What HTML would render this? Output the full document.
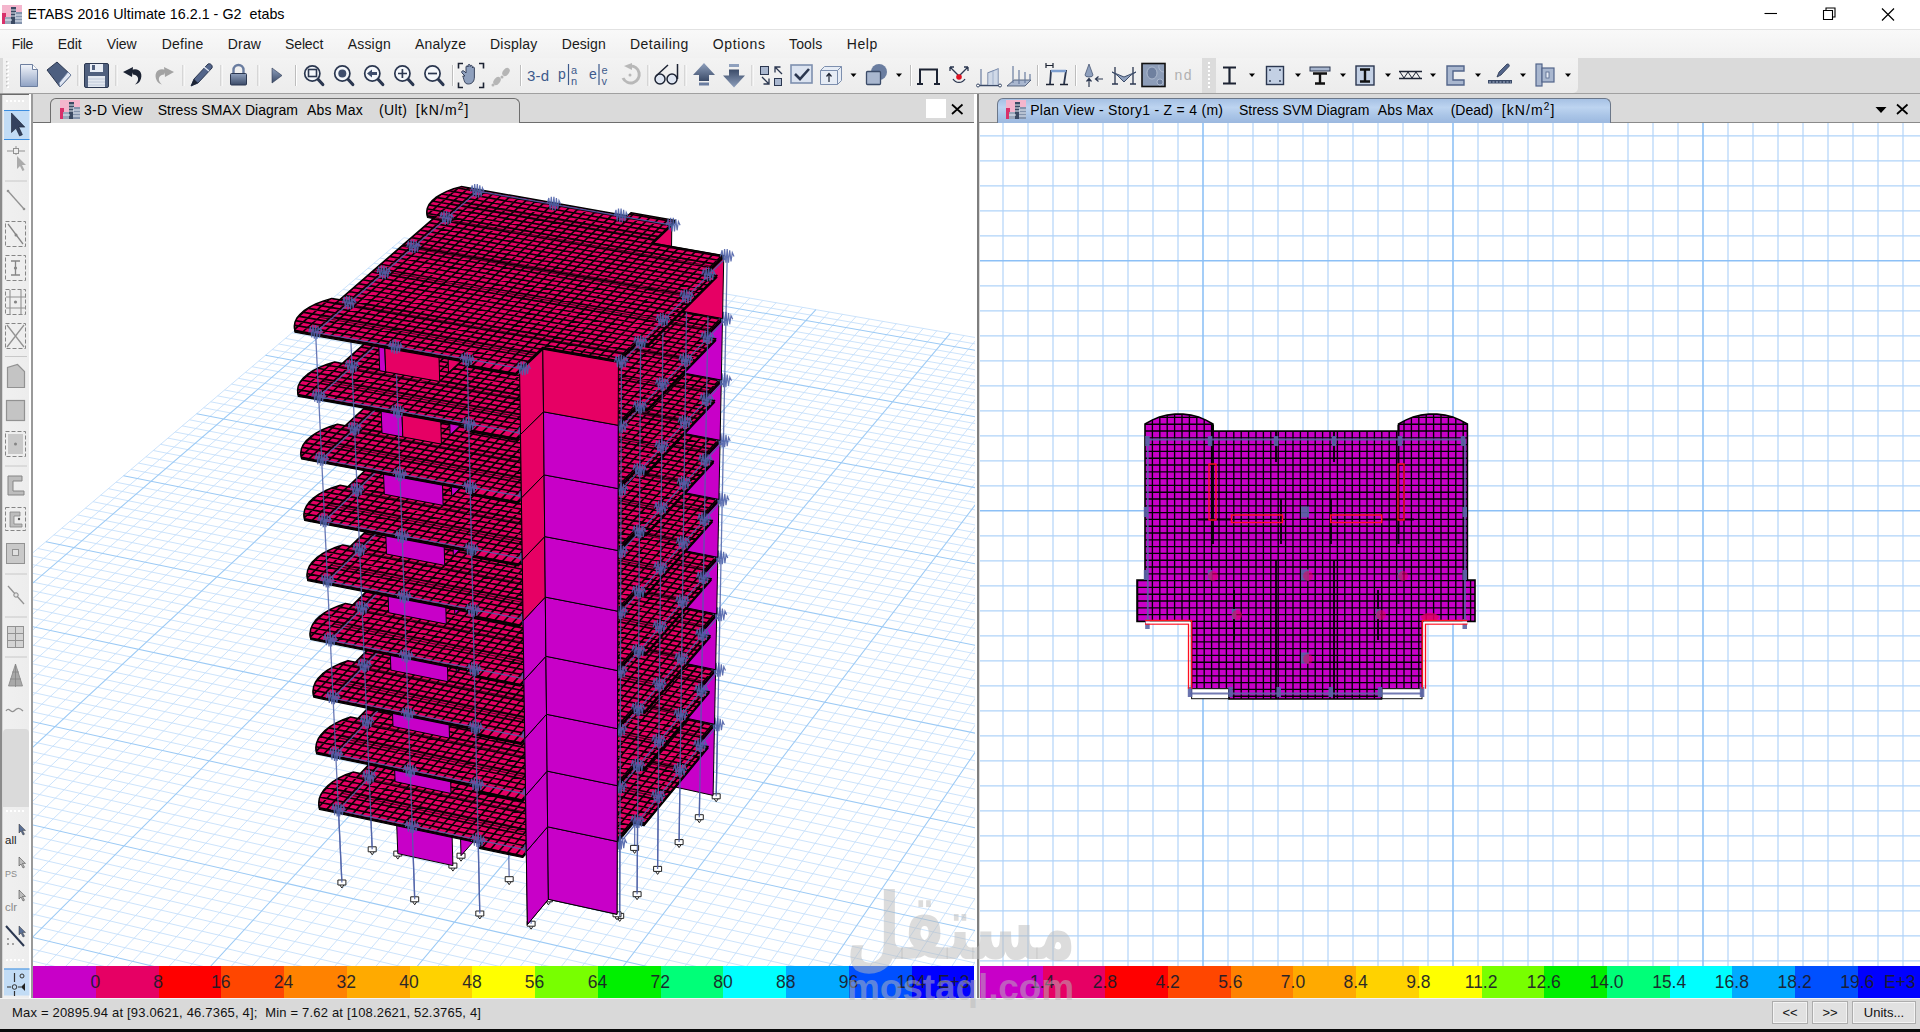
<!DOCTYPE html>
<html lang="en"><head><meta charset="utf-8"><title>ETABS 2016 Ultimate 16.2.1 - G2 etabs</title>
<style>
html,body{margin:0;padding:0}
body{width:1920px;height:1032px;position:relative;overflow:hidden;background:#dadada;font-family:"Liberation Sans",sans-serif}
.abs{position:absolute}
.t{position:absolute;white-space:pre;line-height:normal}
#title{left:0;top:0;width:1920px;height:29px;background:#fff;border-bottom:1px solid #e2e2e2}
#menu{left:0;top:30px;width:1920px;height:28px;background:linear-gradient(#f9f9f9,#f1f1f1)}
#tb{left:3px;top:58px;width:1575px;height:34.500px;background:linear-gradient(#f3f3f3,#ececec);border-radius:0 0 5px 0}
#tbline{left:0;top:93px;width:1920px;height:1px;background:#a0a0a0}
#ltb{left:0;top:94px;width:29px;height:904px;background:linear-gradient(90deg,#8a8a8a 0,#8a8a8a 1.5px,#d6d6d6 1.5px,#d6d6d6 3px,#f0f0f0 3px,#ededed 29px);border-top:1px solid #6a6a6a;box-sizing:border-box}
#ltbgap{left:3px;top:729px;width:26px;height:78px;background:#dadada;border-radius:4px 4px 0 0}
#lborder{left:29px;top:94px;width:3.500px;height:904px;background:linear-gradient(90deg,#fff 0,#fff 2px,#9a9a9a 2px,#9a9a9a 3.500px)}
#lhead{left:32.500px;top:94px;width:941.500px;height:27.500px;background:#dadada;border-bottom:1.500px solid #6e6e6e;box-sizing:content-box}
#ltab{left:50px;top:97.500px;width:470px;height:25px;background:#dadada;border:1.500px solid #6e6e6e;border-bottom:none;border-radius:6px 6px 0 0;box-sizing:border-box}
#lview{left:33px;top:123px;width:941.500px;height:843px;background:#fff;overflow:hidden}
#vdiv{left:974px;top:94px;width:5px;height:904px;background:linear-gradient(90deg,#fff 0,#fff 3.200px,#7e7e7e 3.200px,#7e7e7e 4.800px,#dadada 4.800px)}
#rhead{left:979px;top:94px;width:941px;height:27.500px;background:#dadada;border-bottom:1.500px solid #8a8a8a}
#rtab{left:997px;top:97.500px;width:614px;height:25.500px;background:linear-gradient(#a6c1e4,#bdd4f0 35%,#aac5e7 68%,#9bb8df);border:1.300px solid #6b7789;border-bottom:none;border-radius:6px 6px 0 0;box-sizing:border-box}
#rview{left:980px;top:123px;width:940px;height:843px;background:#fff;overflow:hidden}
.leg{overflow:hidden}
.lg{position:absolute;top:5.700px;width:60px;text-align:center;font-size:17.500px;color:#1c1c2a;line-height:normal;opacity:.93}
#status{left:0;top:998px;width:1920px;height:31px;background:#d9d9d9;border-top:1px solid #f4f4f4;box-sizing:border-box}
#bottom{left:0;top:1029px;width:1920px;height:3px;background:#0a0a0a}
.btn{position:absolute;top:1001px;height:23px;border:1px solid #adadad;background:#e1e1e1;box-sizing:border-box;font-size:13px;text-align:center;line-height:21px;color:#111;box-shadow:inset 0 0 0 1px #f3f3f3}
.sup{font-size:10px;position:relative;top:-5px}
#wm{left:846px;top:880px;width:240px;height:130px;color:rgba(185,185,185,.5);pointer-events:none}
</style></head>
<body>
<div id="title" class="abs"></div>
<svg class="abs" style="left:2px;top:4px" width="20" height="20" viewBox="0 0 20 20"><rect x="0" y="1" width="20" height="14" fill="#f4b6cd"/><rect x="0" y="9" width="4" height="11" fill="#d8306a"/><path d="M3 13h7v7h-7z" fill="#9aa7bb"/><path d="M9 3h5v17h-5z" fill="#3b4a63"/><path d="M13 8h7v12h-7z" fill="#8494ad"/><path d="M9 6h5M9 9h5M9 12h5M13 11h7M13 14h7M13 17h7M3 16h7" stroke="#e9eef6" stroke-width="1"/></svg>
<svg class="abs" style="left:1740px;top:0" width="180" height="30" viewBox="1740 0 180 30"><path d="M1764.500 13.500h12.500" stroke="#000" stroke-width="1.100"/><path d="M1823.500 10.500h9v9h-9zM1826 10.500v-2.500h9v9h-2.500" fill="none" stroke="#000" stroke-width="1.100"/><path d="M1882 8.500l12 12M1894 8.500l-12 12" stroke="#000" stroke-width="1.200"/></svg>
<div id="menu" class="abs"></div>
<div id="tb" class="abs"></div>
<svg class="abs" style="left:0;top:56px" width="1920" height="40" viewBox="0 56 1920 40"><g fill="#fff"><rect x="7" y="62" width="2" height="2"/><rect x="7" y="66" width="2" height="2"/><rect x="7" y="70" width="2" height="2"/><rect x="7" y="74" width="2" height="2"/><rect x="7" y="78" width="2" height="2"/><rect x="7" y="82" width="2" height="2"/><rect x="7" y="86" width="2" height="2"/></g><g fill="#c4c4c4"><rect x="6" y="61" width="1.5" height="1.5"/><rect x="6" y="65" width="1.5" height="1.5"/><rect x="6" y="69" width="1.5" height="1.5"/><rect x="6" y="73" width="1.5" height="1.5"/><rect x="6" y="77" width="1.5" height="1.5"/><rect x="6" y="81" width="1.5" height="1.5"/><rect x="6" y="85" width="1.5" height="1.5"/></g><defs><linearGradient id="gdoc" x1="0" y1="0" x2="0" y2="1"><stop offset="0" stop-color="#f2f5fa"/><stop offset="1" stop-color="#8fa2c4"/></linearGradient><linearGradient id="gblue" x1="0" y1="0" x2="0" y2="1"><stop offset="0" stop-color="#8fa0bd"/><stop offset="1" stop-color="#3b4b68"/></linearGradient><linearGradient id="gblue2" x1="0" y1="0" x2="0" y2="1"><stop offset="0" stop-color="#3b4b68"/><stop offset="1" stop-color="#8fa0bd"/></linearGradient></defs><path d="M20.5 64.5h12l5 5v17h-17z" fill="url(#gdoc)" stroke="#6d7f9f" stroke-width="1"/><path d="M32.5 64.5v5h5" fill="#fff" stroke="#6d7f9f" stroke-width="1"/><path d="M47 70l10-8 14 13-11 12z" fill="#4d5f80" stroke="#2b3750" stroke-width="1"/><path d="M60 87l11-12-3-3-9 11z" fill="#dfe6f2" stroke="#6a7da0" stroke-width=".8"/><line x1="78" y1="65" x2="78" y2="86" stroke="#bdbdbd" stroke-width="1"/><line x1="79" y1="65" x2="79" y2="86" stroke="#fff" stroke-width="1"/><rect x="84.5" y="63.5" width="24" height="24" rx="1.5" fill="#50607e" stroke="#2b3750"/><rect x="90" y="64" width="13" height="8" fill="#e9eef6"/><rect x="92" y="65" width="3" height="5" fill="#50607e"/><rect x="88" y="76" width="17" height="11" fill="#e3e8f0"/><path d="M88 79h17M88 82h17M88 85h17" stroke="#b8c2d3" stroke-width=".8"/><line x1="116" y1="65" x2="116" y2="86" stroke="#bdbdbd" stroke-width="1"/><line x1="117" y1="65" x2="117" y2="86" stroke="#fff" stroke-width="1"/><path d="M131 70c8-3 13 3 9 11-1 2-3 3-5 3.5 4-3 5-9-2-10z" fill="#1c2333"/><path d="M123 72l10-5-1 10z" fill="#1c2333"/><path d="M166 70c-8-3-13 3-9 11 1 2 3 3 5 3.5-4-3-5-9 2-10z" fill="#a3a3a3"/><path d="M174 72l-10-5 1 10z" fill="#a3a3a3"/><line x1="183" y1="65" x2="183" y2="86" stroke="#bdbdbd" stroke-width="1"/><line x1="184" y1="65" x2="184" y2="86" stroke="#fff" stroke-width="1"/><path d="M191 86l3-7 14-15c2-1 5 1 4 4l-14 15z" fill="#53658a" stroke="#2b3750" stroke-width="1"/><path d="M191 86l3-7 4 4z" fill="#1c2333"/><path d="M204 67l5 4" stroke="#dfe6f2" stroke-width="1.5"/><line x1="221" y1="65" x2="221" y2="86" stroke="#bdbdbd" stroke-width="1"/><line x1="222" y1="65" x2="222" y2="86" stroke="#fff" stroke-width="1"/><path d="M233.5 74v-4a5 5 0 0 1 10 0v4" fill="none" stroke="#6a7da0" stroke-width="2.4"/><rect x="230.5" y="73.5" width="16" height="11.5" rx="1" fill="url(#gblue)" stroke="#2b3750"/><line x1="258" y1="65" x2="258" y2="86" stroke="#bdbdbd" stroke-width="1"/><line x1="259" y1="65" x2="259" y2="86" stroke="#fff" stroke-width="1"/><path d="M272 68l10 7.5-10 7.5z" fill="url(#gblue)" stroke="#2b3750" stroke-width=".6"/><line x1="295.5" y1="65" x2="295.5" y2="86" stroke="#bdbdbd" stroke-width="1"/><line x1="296.5" y1="65" x2="296.5" y2="86" stroke="#fff" stroke-width="1"/><line x1="317.8" y1="79" x2="322.8" y2="84.5" stroke="#2b3750" stroke-width="3.2" stroke-linecap="round"/><circle cx="312.3" cy="73.5" r="7.6" fill="#f4f7fb" stroke="#2b3750" stroke-width="1.7"/><rect x="308.5" y="69.5" width="8" height="7" fill="none" stroke="#2b3750" stroke-width="1.6"/><line x1="347.8" y1="79" x2="352.8" y2="84.5" stroke="#2b3750" stroke-width="3.2" stroke-linecap="round"/><circle cx="342.3" cy="73.5" r="7.6" fill="#f4f7fb" stroke="#2b3750" stroke-width="1.7"/><circle cx="342.3" cy="73.5" r="4" fill="#3e4d6c"/><line x1="377.8" y1="79" x2="382.8" y2="84.5" stroke="#2b3750" stroke-width="3.2" stroke-linecap="round"/><circle cx="372.3" cy="73.5" r="7.6" fill="#f4f7fb" stroke="#2b3750" stroke-width="1.7"/><path d="M367 73.5l5-4v2.500h5v3h-5v2.500z" fill="#3e4d6c"/><line x1="407.9" y1="79" x2="412.9" y2="84.5" stroke="#2b3750" stroke-width="3.2" stroke-linecap="round"/><circle cx="402.4" cy="73.5" r="7.6" fill="#f4f7fb" stroke="#2b3750" stroke-width="1.7"/><path d="M398 73.5h9M402.400 69v9" stroke="#2b3750" stroke-width="1.700"/><line x1="438" y1="79" x2="443" y2="84.5" stroke="#2b3750" stroke-width="3.2" stroke-linecap="round"/><circle cx="432.5" cy="73.5" r="7.6" fill="#f4f7fb" stroke="#2b3750" stroke-width="1.7"/><path d="M428 73.5h9" stroke="#2b3750" stroke-width="1.700"/><line x1="452.5" y1="65" x2="452.5" y2="86" stroke="#bdbdbd" stroke-width="1"/><line x1="453.5" y1="65" x2="453.5" y2="86" stroke="#fff" stroke-width="1"/><path d="M463 63.500h-4.500v5M479 63.500h4.500v5M463 87.500h-4.500v-5M479 87.500h4.500v-5" fill="none" stroke="#1c2333" stroke-width="1.600"/><path d="M465 76l-3-3c-1-1 0-3 2-2l2 2v-6c0-1.500 2-1.500 2 0v-1.500c0-1.500 2.200-1.500 2.200 0v1c0-1.500 2.200-1.500 2.200 0v1.500c0-1.300 2-1.300 2 0v9c0 4-2 7-6 7s-4-3-5.600-8z" fill="#8fa0bd" stroke="#2b3750" stroke-width=".9"/><g fill="#b5b5b5"><ellipse cx="497" cy="81" rx="3" ry="4.500" transform="rotate(40 497 81)"/><ellipse cx="506" cy="72" rx="3" ry="4.500" transform="rotate(40 506 72)"/><circle cx="493" cy="85" r="1.500"/><circle cx="502" cy="77" r="1.500"/></g><line x1="520.5" y1="65" x2="520.5" y2="86" stroke="#bdbdbd" stroke-width="1"/><line x1="521.5" y1="65" x2="521.5" y2="86" stroke="#fff" stroke-width="1"/><g font-family="Liberation Sans, sans-serif" fill="#3d5a8c" font-size="15"><text x="527" y="81" textLength="22">3-d</text><text x="558" y="79" font-size="14">p</text><text x="571" y="74" font-size="11">a</text><text x="571" y="85" font-size="11">n</text><path d="M568.500 64v21" stroke="#3d5a8c" stroke-width="1.200"/><text x="589" y="79" font-size="14">e</text><text x="601.500" y="74" font-size="11">e</text><text x="601.500" y="85" font-size="11">v</text><path d="M599 64v21" stroke="#3d5a8c" stroke-width="1.200"/></g><path d="M630 66a8.500 8.500 0 1 1-7 12" fill="none" stroke="#b8b8b8" stroke-width="3"/><path d="M624 66l8-3v7z" fill="#b8b8b8"/><circle cx="630" cy="75" r="1.500" fill="#b8b8b8"/><line x1="648" y1="65" x2="648" y2="86" stroke="#bdbdbd" stroke-width="1"/><line x1="649" y1="65" x2="649" y2="86" stroke="#fff" stroke-width="1"/><circle cx="660" cy="79" r="5" fill="#dfe6f2" stroke="#1c2333" stroke-width="1.500"/><circle cx="672" cy="79" r="5" fill="#dfe6f2" stroke="#1c2333" stroke-width="1.500"/><path d="M656 76l12-11M677.500 79v-15" stroke="#1c2333" stroke-width="1.500" fill="none"/><line x1="685" y1="65" x2="685" y2="86" stroke="#bdbdbd" stroke-width="1"/><line x1="686" y1="65" x2="686" y2="86" stroke="#fff" stroke-width="1"/><path d="M704 63l11 12h-6v6h-10v-6h-6z" fill="url(#gblue)"/><rect x="699" y="82.500" width="10" height="3" fill="#6a7da0"/><path d="M734 87.500l11-12h-6v-6h-10v6h-6z" fill="url(#gblue2)"/><rect x="729" y="64" width="10" height="3" fill="#8fa0bd"/><line x1="752" y1="65" x2="752" y2="86" stroke="#bdbdbd" stroke-width="1"/><line x1="753" y1="65" x2="753" y2="86" stroke="#fff" stroke-width="1"/><rect x="760.500" y="66.500" width="8" height="8" fill="#a9b7cf" stroke="#2b3750"/><rect x="774.500" y="78.500" width="7" height="7" fill="#a9b7cf" stroke="#2b3750"/><path d="M782 74l-7-7M775 72.500v-5.500h5.500M762 77l7 7M769 78.500v5.500h-5.500" stroke="#2b3750" stroke-width="1.300" fill="none"/><rect x="791" y="65" width="21" height="18" fill="#dbe3f0" stroke="#7d8fae" stroke-width="1.600"/><path d="M795 74l5 5 9-10" fill="none" stroke="#2b3750" stroke-width="2.600"/><path d="M820.500 70.500l4-4h17v14l-4 4h-17z" fill="#e6ecf5" stroke="#7d8fae"/><path d="M820.500 70.500h17v14M837.500 70.500l4-4" fill="none" stroke="#7d8fae"/><path d="M829 82v-8M826.500 76.500l2.500-3 2.500 3" stroke="#1c2333" stroke-width="1.200" fill="none"/><path d="M850.5 73.5h6l-3 3.5z" fill="#000"/><circle cx="879" cy="72" r="8" fill="#6a7da0"/><rect x="866.500" y="71.500" width="14" height="13" rx="1" fill="#a9b7cf" stroke="#3b4b68" stroke-width="1.300"/><path d="M896 73.5h6l-3 3.5z" fill="#000"/><line x1="910.5" y1="65" x2="910.5" y2="86" stroke="#bdbdbd" stroke-width="1"/><line x1="911.5" y1="65" x2="911.5" y2="86" stroke="#fff" stroke-width="1"/><path d="M920 84v-14.500h17v14.500M917 84h6M934 84h6" fill="none" stroke="#1c2333" stroke-width="2"/><path d="M950 67l9 9 9-9M950 67h4M950 67v4M968 67h-4M968 67v4" fill="none" stroke="#2b3750" stroke-width="1.300"/><path d="M953 79a7 7 0 0 0 12 0" fill="none" stroke="#2b3750" stroke-width="1.300"/><circle cx="959" cy="77" r="2.800" fill="#e01020"/><path d="M977 85.500h24" stroke="#3b4b68" stroke-width="1.500"/><path d="M981 85v-16M988 85v-12l5-2v14M993 71l5-2v16" fill="none" stroke="#6a7da0" stroke-width="1.200"/><path d="M988 73l10-4v16h-10z" fill="#c3d0e4" opacity=".7"/><circle cx="978" cy="85.500" r="1.500" fill="#fff" stroke="#3b4b68"/><circle cx="1000" cy="85.500" r="1.500" fill="#fff" stroke="#3b4b68"/><path d="M1007 86l7-6h17l-6 6z" fill="#a9b7cf" stroke="#3b4b68" stroke-width=".8"/><path d="M1013 66v17M1019 70v14M1025 72v11M1030 74v6" stroke="#6a7da0" stroke-width="1.200"/><line x1="1037.5" y1="65" x2="1037.5" y2="86" stroke="#bdbdbd" stroke-width="1"/><line x1="1038.5" y1="65" x2="1038.5" y2="86" stroke="#fff" stroke-width="1"/><path d="M1046 63v5M1053 63v5M1046 65.500h7" stroke="#1c2333" stroke-width="1.200" fill="none"/><path d="M1050 84l1-13h15l-2 13" fill="none" stroke="#2b3750" stroke-width="1.800"/><path d="M1051 71h15" stroke="#7d9fd0" stroke-width="2.500"/><path d="M1046 84.500h8M1060 84.500h8" stroke="#1c2333" stroke-width="1.500"/><line x1="1075.5" y1="65" x2="1075.5" y2="86" stroke="#bdbdbd" stroke-width="1"/><line x1="1076.5" y1="65" x2="1076.5" y2="86" stroke="#fff" stroke-width="1"/><path d="M1089 64l4 11a4 2 0 0 1-8 0z" fill="#8fa0bd" stroke="#3b4b68" stroke-width=".7"/><path d="M1089 87v-8M1086.500 81.500l2.500-3 2.500 3M1103 79h-7M1098.500 76.500l-3 2.500 3 2.500" stroke="#2b3750" stroke-width="1.200" fill="none"/><path d="M1115 67v17M1133 67v17M1112 84h6M1130 84h6" stroke="#2b3750" stroke-width="1.300" fill="none"/><path d="M1112 72l12 5 12-5-5 3-7 7-7-7z" fill="#8fa0bd" stroke="#3b4b68" stroke-width="1"/><rect x="1142" y="63.500" width="23" height="23" fill="#8d9db8" stroke="#111" stroke-width="1.600"/><ellipse cx="1152" cy="73" rx="5" ry="6" fill="#6f809f" stroke="#b7c3d6" stroke-width=".8"/><ellipse cx="1160" cy="82" rx="3" ry="3" fill="#6f809f" stroke="#b7c3d6" stroke-width=".8"/><path d="M1159 65c-1 4 2 7 5 7" fill="none" stroke="#b7c3d6" stroke-width=".8"/><text x="1174.500" y="80" font-family="Liberation Sans, sans-serif" font-size="14" fill="#b0b0b0" textLength="17">nd</text><rect x="1202" y="58" width="14" height="35" fill="#dcdcdc"/><g fill="#fff"><rect x="1208" y="62" width="2" height="2"/><rect x="1208" y="66" width="2" height="2"/><rect x="1208" y="70" width="2" height="2"/><rect x="1208" y="74" width="2" height="2"/><rect x="1208" y="78" width="2" height="2"/><rect x="1208" y="82" width="2" height="2"/><rect x="1208" y="86" width="2" height="2"/></g><path d="M1223 67.500h13M1223 83.500h13M1229.500 67v17" stroke="#1c2333" stroke-width="2.200" fill="none"/><path d="M1249 73.5h6l-3 3.5z" fill="#000"/><rect x="1266.500" y="66.500" width="17" height="18" fill="#c3d0e4" stroke="#2b3750" stroke-width="1.400"/><g fill="#2b3750"><circle cx="1270" cy="70" r=".9"/><circle cx="1280" cy="70" r=".9"/><circle cx="1270" cy="81" r=".9"/><circle cx="1280" cy="81" r=".9"/></g><path d="M1295 73.5h6l-3 3.5z" fill="#000"/><rect x="1310" y="67" width="20" height="4" fill="#a9b7cf" stroke="#2b3750" stroke-width="1"/><path d="M1313 73.500h14M1315 83.500h10M1320 74v9" stroke="#111" stroke-width="2.400" fill="none"/><path d="M1340 73.5h6l-3 3.5z" fill="#000"/><rect x="1356" y="66" width="18" height="19" fill="#c3d0e4" stroke="#2b3750" stroke-width="1.400"/><path d="M1360 69.500h10M1360 81.500h10M1365 69v12" stroke="#111" stroke-width="2.400" fill="none"/><path d="M1385 73.5h6l-3 3.5z" fill="#000"/><path d="M1399 71.500h23M1399 78.500h23" stroke="#1c2333" stroke-width="1.400"/><path d="M1400 72l4 6 4-6 4 6 4-6 4 6" fill="none" stroke="#1c2333" stroke-width="1"/><path d="M1430 73.5h6l-3 3.5z" fill="#000"/><path d="M1447 66h17v5h-11v9h11v5h-17z" fill="#a9b7cf" stroke="#53658a" stroke-width="1.400"/><path d="M1475 73.5h6l-3 3.5z" fill="#000"/><path d="M1497 77l2-5 8-8c1.500-.500 3 1 2 2.500l-8 8.500z" fill="#53658a" stroke="#2b3750" stroke-width=".8"/><rect x="1488" y="80" width="24" height="3.500" fill="#3b4b68"/><path d="M1489 82h22" stroke="#a9b7cf" stroke-width="1" stroke-dasharray="2 1.500"/><path d="M1520 73.5h6l-3 3.5z" fill="#000"/><rect x="1536" y="64" width="6" height="22" fill="#a9b7cf" stroke="#53658a" stroke-width="1.200"/><rect x="1542" y="68" width="12" height="14" fill="#a9b7cf" stroke="#53658a" stroke-width="1.200"/><rect x="1546" y="72" width="3" height="6" fill="#e6ecf5" stroke="#53658a" stroke-width=".8"/><path d="M1565 73.5h6l-3 3.5z" fill="#000"/></svg>
<div id="tbline" class="abs"></div>
<div id="ltb" class="abs"></div><div id="ltbgap" class="abs"></div><div id="lborder" class="abs"></div>
<svg class="abs" style="left:0;top:93px" width="33" height="905" viewBox="0 93 33 905"><g fill="#fff"><rect x="6" y="100" width="2" height="2"/><rect x="10" y="100" width="2" height="2"/><rect x="14" y="100" width="2" height="2"/><rect x="18" y="100" width="2" height="2"/><rect x="22" y="100" width="2" height="2"/></g><g fill="#fff"><rect x="6" y="810" width="2" height="2"/><rect x="10" y="810" width="2" height="2"/><rect x="14" y="810" width="2" height="2"/><rect x="18" y="810" width="2" height="2"/><rect x="22" y="810" width="2" height="2"/></g><g fill="#fff"><rect x="6" y="959" width="2" height="2"/><rect x="10" y="959" width="2" height="2"/><rect x="14" y="959" width="2" height="2"/><rect x="18" y="959" width="2" height="2"/><rect x="22" y="959" width="2" height="2"/></g><rect x="4" y="110" width="25.500" height="30" fill="#c2dcf5"/><path d="M4 110.500h25.500M4 139.500h25.500" stroke="#3c8ee0" stroke-width="1"/><path d="M11.500 113v19.500l4.500-4.200 3.600 7.700 2.800-1.300-3.600-7.600h6z" fill="#33415e" stroke="#1a2030" stroke-width=".6"/><path d="M7 151h18M16 146v9" stroke="#929292" stroke-width="1"/><rect x="13.500" y="148.500" width="5" height="5" fill="#eee" stroke="#929292"/><path d="M17 156v13l3-3 2.500 5 2-1-2.500-5h4z" fill="#ababab"/><path d="M5 181h22" stroke="#c8c8c8"/><path d="M8 191l16 18" stroke="#929292" stroke-width="1.300"/><circle cx="8" cy="191" r="1.300" fill="#929292"/><circle cx="24" cy="209" r="1.300" fill="#929292"/><rect x="5.500" y="221.5" width="20" height="25" fill="none" stroke="#858585" stroke-dasharray="4 2"/><path d="M8 224l15 20" stroke="#858585" stroke-width="1.300"/><circle cx="16" cy="235" r="1.500" fill="#858585"/><rect x="5.500" y="255.5" width="20" height="25" fill="none" stroke="#858585" stroke-dasharray="4 2"/><path d="M11 261h9M11 275h9M15.500 261v14" stroke="#858585" stroke-width="1.300"/><circle cx="15.500" cy="268" r="1.600" fill="#858585"/><rect x="5.500" y="289.5" width="20" height="25" fill="none" stroke="#858585" stroke-dasharray="4 2"/><path d="M10 290v25M21 290v25M6 297h20M6 308h20" stroke="#929292" stroke-width="1.100"/><circle cx="15.500" cy="302" r="1.600" fill="#858585"/><rect x="5.500" y="323.5" width="20" height="25" fill="none" stroke="#858585" stroke-dasharray="4 2"/><path d="M7 325l17 22M24 325l-17 22" stroke="#929292" stroke-width="1.300"/><path d="M5 356.5h22" stroke="#c8c8c8"/><path d="M7.500 387.500v-20l10-3 7 7v16z" fill="#c4c4c4" stroke="#929292" stroke-width="1.200"/><rect x="6.500" y="400.500" width="18" height="20" fill="#c4c4c4" stroke="#929292" stroke-width="1.200"/><rect x="5.500" y="431.5" width="20" height="25" fill="none" stroke="#858585" stroke-dasharray="4 2"/><rect x="8" y="434" width="15" height="20" fill="#c9c9c9"/><circle cx="15.500" cy="444" r="1.500" fill="#858585"/><path d="M5 466h22" stroke="#c8c8c8"/><path d="M8 476h14v5h-9v10h11v4h-16z" fill="#bdbdbd" stroke="#858585" stroke-width="1"/><rect x="5.500" y="507.5" width="20" height="23" fill="none" stroke="#858585" stroke-dasharray="4 2"/><path d="M10 512h10v4h-6v8h8v3h-12z" fill="#bdbdbd" stroke="#858585" stroke-width=".8"/><circle cx="19" cy="519" r="1.200" fill="#555"/><rect x="6.500" y="543.500" width="18" height="20" fill="#c9c9c9" stroke="#929292"/><rect x="12.500" y="549.500" width="6" height="6" fill="#e0e0e0" stroke="#929292"/><path d="M5 574h22" stroke="#c8c8c8"/><path d="M8 586l16 18" stroke="#929292" stroke-width="1.300"/><circle cx="16" cy="595" r="2.200" fill="#e8e8e8" stroke="#858585"/><path d="M5 617h22" stroke="#c8c8c8"/><rect x="7.500" y="626.500" width="16" height="21" fill="#d4d4d4" stroke="#929292"/><path d="M15.500 626v22M7 633.500h17M7 640.500h17" stroke="#929292"/><path d="M5 657h22" stroke="#c8c8c8"/><path d="M15.500 664l-7 22h14z" fill="#a9a9a9" stroke="#858585" stroke-width=".8"/><path d="M15.500 664v23M10 679h11M12 672h7" stroke="#858585" stroke-width=".8"/><path d="M6 711c3-5 5 3 8 0s5-4 9 0" fill="none" stroke="#929292" stroke-width="1.300"/><text x="5" y="844" font-family="Liberation Sans, sans-serif" font-size="11.500" fill="#222">all</text><path d="M19 824v9l2-2 2 4 1.500-.800-2-3.800h3z" fill="#5a6f95" stroke="#333" stroke-width=".5"/><text x="5" y="877" font-family="Liberation Sans, sans-serif" font-size="9" fill="#8a8a8a">PS</text><path d="M19 857v9l2-2 2 4 1.500-.800-2-3.800h3z" fill="#bdbdbd" stroke="#333" stroke-width=".5"/><text x="5" y="911" font-family="Liberation Sans, sans-serif" font-size="11.500" fill="#8a8a8a">clr</text><path d="M19 890v9l2-2 2 4 1.500-.800-2-3.800h3z" fill="#bdbdbd" stroke="#333" stroke-width=".5"/><path d="M6 926l18 20" stroke="#2b3750" stroke-width="2"/><g fill="#8a8a8a"><circle cx="8" cy="944" r="1"/><circle cx="13" cy="944" r="1"/><circle cx="8" cy="939" r="1"/></g><path d="M19 926v9l2-2 2 4 1.500-.800-2-3.800h3z" fill="#5a6f95" stroke="#333" stroke-width=".5"/><rect x="4" y="968.500" width="25.500" height="27" fill="#c2dcf5"/><path d="M4 969h25.500" stroke="#3c8ee0"/><path d="M14.500 973v9M14.500 991v5M7 987h4M18 987h3" stroke="#333" stroke-width="1.200"/><circle cx="14.500" cy="987" r="2.300" fill="none" stroke="#333"/><circle cx="22" cy="976" r="2" fill="none" stroke="#333"/><path d="M25 983v8l-4-4z" fill="#222"/></svg>
<div id="lhead" class="abs"></div><div id="ltab" class="abs"></div>
<svg class="abs" style="left:60px;top:99px" width="20" height="20" viewBox="0 0 20 20"><rect x="0" y="1" width="20" height="14" fill="#f4b6cd"/><rect x="0" y="9" width="4" height="11" fill="#d8306a"/><path d="M3 13h7v7h-7z" fill="#9aa7bb"/><path d="M9 3h5v17h-5z" fill="#3b4a63"/><path d="M13 8h7v12h-7z" fill="#8494ad"/><path d="M9 6h5M9 9h5M9 12h5M13 11h7M13 14h7M13 17h7M3 16h7" stroke="#e9eef6" stroke-width="1"/></svg>
<div class="abs" style="left:926px;top:99px;width:20px;height:19px;background:#fff"></div>
<svg class="abs" style="left:948px;top:100px" width="18" height="18" viewBox="948 100 18 18"><path d="M952 104.500l10.500 9.500M962.500 104.500l-10.500 9.500" stroke="#000" stroke-width="1.700"/></svg>
<div id="vdiv" class="abs"></div>
<div id="rhead" class="abs"></div><div id="rtab" class="abs"></div>
<svg class="abs" style="left:1006px;top:99px" width="20" height="20" viewBox="0 0 20 20"><rect x="0" y="1" width="20" height="14" fill="#f4b6cd"/><rect x="0" y="9" width="4" height="11" fill="#d8306a"/><path d="M3 13h7v7h-7z" fill="#9aa7bb"/><path d="M9 3h5v17h-5z" fill="#3b4a63"/><path d="M13 8h7v12h-7z" fill="#8494ad"/><path d="M9 6h5M9 9h5M9 12h5M13 11h7M13 14h7M13 17h7M3 16h7" stroke="#e9eef6" stroke-width="1"/></svg>
<svg class="abs" style="left:1870px;top:100px" width="45" height="18" viewBox="1870 100 45 18"><path d="M1875.500 107h11l-5.500 6z" fill="#000"/><path d="M1897 104.500l10.500 9.500M1907.500 104.500l-10.500 9.500" stroke="#000" stroke-width="1.700"/></svg>
<div id="lview" class="abs"><svg class="abs" style="left:0;top:0" width="942" height="844" viewBox="0 0 942 844"><path d="M371.0 114.7L1485.8 309.5M365.1 119.8L1482.6 315.6M353.1 129.9L1476.2 327.8M347.1 135.1L1472.9 334.0M341.0 140.2L1469.7 340.2M334.9 145.4L1466.4 346.5M328.8 150.6L1463.0 352.8M322.6 155.8L1459.7 359.2M316.4 161.1L1456.4 365.5M310.1 166.4L1453.0 371.9M303.9 171.7L1449.6 378.4M291.2 182.4L1442.7 391.4M284.8 187.9L1439.3 398.0M278.4 193.3L1435.8 404.6M272.0 198.8L1432.3 411.3M265.5 204.3L1428.8 418.0M259.0 209.8L1425.2 424.7M252.4 215.4L1421.7 431.5M245.8 221.0L1418.1 438.3M239.2 226.6L1414.5 445.2M225.8 238.0L1407.2 459.1M219.0 243.7L1403.5 466.1M212.3 249.5L1399.8 473.1M205.4 255.3L1396.1 480.2M198.6 261.1L1392.3 487.3M191.7 267.0L1388.6 494.5M184.7 272.9L1384.8 501.7M177.7 278.8L1380.9 509.0M170.7 284.8L1377.1 516.3M156.5 296.8L1369.3 531.1M149.3 302.9L1365.4 538.6M142.1 309.0L1361.5 546.1M134.9 315.1L1357.5 553.6M127.6 321.3L1353.5 561.3M120.3 327.5L1349.4 568.9M112.9 333.8L1345.4 576.6M105.5 340.1L1341.3 584.4M98.0 346.4L1337.2 592.2M83.0 359.2L1328.9 608.0M75.4 365.7L1324.7 616.0M67.7 372.2L1320.5 624.0M60.0 378.7L1316.2 632.1M52.3 385.3L1312.0 640.2M44.5 391.9L1307.7 648.4M36.7 398.5L1303.3 656.7M28.8 405.2L1298.9 665.0M20.8 411.9L1294.5 673.3M4.8 425.5L1285.7 690.3M-3.3 432.4L1281.2 698.8M-11.4 439.3L1276.6 707.4M-19.6 446.3L1272.1 716.1M-27.8 453.3L1267.5 724.8M-36.1 460.3L1262.9 733.6M-44.5 467.4L1258.2 742.4M-52.9 474.5L1253.6 751.3M-61.3 481.7L1248.8 760.3M-78.4 496.2L1239.3 778.5M-87.0 503.5L1234.5 787.6M-95.7 510.9L1229.6 796.9M-104.4 518.3L1224.7 806.2M-113.2 525.7L1219.8 815.5M-122.1 533.2L1214.8 825.0M-131.0 540.8L1209.8 834.5M-139.9 548.4L1204.8 844.1M-149.0 556.1L1199.7 853.7M-167.2 571.5L1189.5 873.3M-176.4 579.4L1184.3 883.1M-185.7 587.2L1179.0 893.1M-195.0 595.2L1173.8 903.1M-204.4 603.1L1168.5 913.2M-213.9 611.2L1163.1 923.4M-223.4 619.2L1157.7 933.6M-233.0 627.4L1152.3 944.0M-242.6 635.6L1146.8 954.4M-262.2 652.2L1135.7 975.5M-272.0 660.5L1130.1 986.1M-281.9 668.9L1124.5 996.9M-291.9 677.4L1118.8 1007.7M-302.0 686.0L1113.1 1018.6M-312.2 694.6L1107.3 1029.6M-322.4 703.3L1101.4 1040.7M-332.6 712.0L1095.6 1051.9M-343.0 720.8L1089.6 1063.1M-363.9 738.6L1077.7 1085.9M-374.5 747.5L1071.6 1097.5M-385.2 756.6L1065.5 1109.1M-395.9 765.7L1059.3 1120.9M-406.7 774.9L1053.1 1132.7M-417.6 784.1L1046.8 1144.6M-428.6 793.4L1040.5 1156.6M-439.7 802.8L1034.1 1168.8M-450.8 812.3L1027.7 1181.0M371.0 114.7L-462.0 821.8M383.5 116.9L-446.0 825.8M408.5 121.3L-413.9 833.9M421.0 123.5L-397.7 837.9M433.6 125.7L-381.6 842.0M446.2 127.9L-365.3 846.0M458.8 130.1L-349.0 850.1M471.4 132.3L-332.7 854.2M484.1 134.5L-316.3 858.3M496.8 136.7L-299.9 862.4M509.5 138.9L-283.4 866.5M535.0 143.4L-250.4 874.8M547.8 145.6L-233.8 879.0M560.6 147.9L-217.1 883.2M573.5 150.1L-200.4 887.3M586.4 152.3L-183.6 891.5M599.3 154.6L-166.8 895.7M612.2 156.9L-150.0 900.0M625.2 159.1L-133.1 904.2M638.2 161.4L-116.1 908.5M664.2 166.0L-82.0 917.0M677.3 168.2L-64.9 921.3M690.4 170.5L-47.8 925.6M703.5 172.8L-30.6 929.9M716.7 175.1L-13.3 934.2M729.9 177.4L4.0 938.5M743.1 179.7L21.3 942.9M756.3 182.0L38.7 947.2M769.6 184.4L56.2 951.6M796.2 189.0L91.3 960.4M809.6 191.3L108.9 964.8M822.9 193.7L126.6 969.2M836.4 196.0L144.3 973.7M849.8 198.4L162.1 978.1M863.3 200.7L179.9 982.6M876.8 203.1L197.8 987.1M890.3 205.4L215.7 991.6M903.8 207.8L233.7 996.1M931.0 212.6L269.9 1005.1M944.7 214.9L288.0 1009.7M958.3 217.3L306.2 1014.2M972.0 219.7L324.5 1018.8M985.8 222.1L342.8 1023.4M999.5 224.5L361.2 1028.0M1013.3 226.9L379.6 1032.6M1027.2 229.3L398.1 1037.3M1041.0 231.8L416.7 1041.9M1068.8 236.6L453.9 1051.2M1082.7 239.1L472.7 1055.9M1096.7 241.5L491.4 1060.6M1110.7 243.9L510.3 1065.3M1124.7 246.4L529.2 1070.1M1138.8 248.9L548.1 1074.8M1152.9 251.3L567.1 1079.6M1167.0 253.8L586.2 1084.4M1181.2 256.3L605.3 1089.2M1209.6 261.2L643.7 1098.8M1223.8 263.7L663.1 1103.6M1238.1 266.2L682.4 1108.5M1252.4 268.7L701.8 1113.3M1266.8 271.2L721.3 1118.2M1281.2 273.7L740.9 1123.1M1295.6 276.2L760.5 1128.0M1310.0 278.8L780.2 1133.0M1324.5 281.3L799.9 1137.9M1353.5 286.4L839.6 1147.8M1368.1 288.9L859.5 1152.8M1382.7 291.5L879.5 1157.8M1397.3 294.0L899.5 1162.9M1412.0 296.6L919.7 1167.9M1426.7 299.1L939.8 1172.9M1441.4 301.7L960.1 1178.0M1456.2 304.3L980.4 1183.1M1471.0 306.9L1000.8 1188.2" stroke="#c3defa" stroke-width=".85" fill="none"/><path d="M359.1 124.8L1479.4 321.7M297.6 177.1L1446.2 384.9M232.5 232.3L1410.8 452.1M163.6 290.8L1373.2 523.7M90.5 352.8L1333.1 600.1M12.9 418.7L1290.1 681.8M-69.8 488.9L1244.1 769.3M-158.0 563.8L1194.6 863.5M-252.4 643.8L1141.3 964.9M-353.4 729.6L1083.7 1074.5M-462.0 821.8L1021.2 1193.3M396.0 119.1L-430.0 829.8M522.2 141.1L-266.9 870.7M651.2 163.7L-99.1 912.7M782.9 186.7L73.7 956.0M917.4 210.2L251.8 1000.6M1054.9 234.2L435.3 1046.6M1195.4 258.7L624.5 1094.0M1339.0 283.8L819.7 1142.9M1485.8 309.5L1021.2 1193.3" stroke="#9ccaf5" stroke-width="1.05" fill="none"/><path d="M305.5 687.2L308.9 759.5M336.2 654.4L339.2 726.3M367.9 620.6L370.5 692.0M395.2 591.6L397.4 662.6M425.4 559.3L427.3 629.8M453.7 529.1L455.1 599.3M379.2 703.8L381.7 776.3M453.9 621.4L455.3 692.9M524.6 543.4L525.1 613.7M445.2 717.8L446.8 790.5M474.9 683.9L476.2 756.2M517.8 635.1L518.5 706.7M559.3 587.9L559.4 658.9M586.7 556.7L586.5 627.3M526.0 679.9L526.6 752.1M588.8 607.0L588.6 678.3M497.1 727.8L498.1 800.7M634.9 567.1L634.1 637.8M602.0 653.0L601.6 724.9M586.9 720.1L586.7 792.9M604.6 698.7L604.1 771.2M625.3 673.8L624.6 745.9M647.1 647.3L646.1 719.1M667.5 622.7L666.3 694.2M684.6 602.1L683.2 673.3" stroke="#4f62a8" stroke-width="1.3" fill="none" opacity=".85"/><g fill="#fff" stroke="#222" stroke-width="1"><path d="M304.9 757.0h8v5h-8zM306.9 762.0l2 3 2-3" /><path d="M335.2 723.8h8v5h-8zM337.2 728.8l2 3 2-3" /><path d="M366.5 689.5h8v5h-8zM368.5 694.5l2 3 2-3" /><path d="M393.4 660.1h8v5h-8zM395.4 665.1l2 3 2-3" /><path d="M423.3 627.3h8v5h-8zM425.3 632.3l2 3 2-3" /><path d="M451.1 596.8h8v5h-8zM453.1 601.8l2 3 2-3" /><path d="M377.7 773.8h8v5h-8zM379.7 778.8l2 3 2-3" /><path d="M451.3 690.4h8v5h-8zM453.3 695.4l2 3 2-3" /><path d="M521.1 611.2h8v5h-8zM523.1 616.2l2 3 2-3" /><path d="M442.8 788.0h8v5h-8zM444.8 793.0l2 3 2-3" /><path d="M472.2 753.7h8v5h-8zM474.2 758.7l2 3 2-3" /><path d="M514.5 704.2h8v5h-8zM516.5 709.2l2 3 2-3" /><path d="M555.4 656.4h8v5h-8zM557.4 661.4l2 3 2-3" /><path d="M582.5 624.8h8v5h-8zM584.5 629.8l2 3 2-3" /><path d="M522.6 749.6h8v5h-8zM524.6 754.6l2 3 2-3" /><path d="M584.6 675.8h8v5h-8zM586.6 680.8l2 3 2-3" /><path d="M494.1 798.2h8v5h-8zM496.1 803.2l2 3 2-3" /><path d="M630.1 635.3h8v5h-8zM632.1 640.3l2 3 2-3" /><path d="M597.6 722.4h8v5h-8zM599.6 727.4l2 3 2-3" /><path d="M582.7 790.4h8v5h-8zM584.7 795.4l2 3 2-3" /><path d="M600.1 768.7h8v5h-8zM602.1 773.7l2 3 2-3" /><path d="M620.6 743.4h8v5h-8zM622.6 748.4l2 3 2-3" /><path d="M642.1 716.6h8v5h-8zM644.1 721.6l2 3 2-3" /><path d="M662.3 691.7h8v5h-8zM664.3 696.7l2 3 2-3" /><path d="M679.2 670.8h8v5h-8zM681.2 675.8l2 3 2-3" /><path d="M360.8 728.1h8v5h-8zM362.8 733.1l2 3 2-3" /><path d="M415.9 740.1h8v5h-8zM417.9 745.1l2 3 2-3" /><path d="M424.0 730.2h8v5h-8zM426.0 735.2l2 3 2-3" /><path d="M447.3 703.8h8v5h-8zM449.3 708.8l2 3 2-3" /><path d="M511.4 773.8h8v5h-8zM513.4 778.8l2 3 2-3" /><path d="M580.0 788.8h8v5h-8zM582.0 793.8l2 3 2-3" /></g><defs><clipPath id="c0"><path d="M269.8 208.7 L261.9 207.3 L261.3 203.2 L262.0 199.1 L263.9 195.1 L267.1 191.2 L271.4 187.4 L276.9 183.9 L283.3 180.7 L290.7 177.9 L298.8 175.4 L306.6 176.8 L402.0 94.1 L394.5 92.8 L393.8 89.0 L394.3 85.2 L396.0 81.5 L398.9 77.9 L402.8 74.5 L407.9 71.3 L413.8 68.4 L420.7 65.8 L428.3 63.6 L594.6 92.9 L598.0 89.7 L642.1 97.5 L618.6 120.0 L690.8 132.7 L672.8 150.6 L684.0 152.5 L614.6 222.0 L603.2 220.0 L585.4 237.7 L509.8 224.4 L482.6 250.6 L435.3 242.3 L439.4 238.4Z"/></clipPath><clipPath id="c1"><path d="M273.0 272.9 L265.1 271.5 L264.6 267.3 L265.2 263.1 L267.2 259.0 L270.3 255.0 L274.6 251.2 L280.0 247.7 L286.3 244.4 L293.6 241.5 L301.6 239.0 L309.4 240.4 L403.7 156.2 L396.2 154.8 L395.6 151.0 L396.1 147.1 L397.8 143.3 L400.6 139.7 L404.5 136.2 L409.5 132.9 L415.4 130.0 L422.2 127.3 L429.7 125.1 L594.3 155.0 L597.7 151.7 L641.4 159.6 L618.1 182.6 L689.5 195.5 L671.8 213.7 L682.8 215.7 L614.2 286.4 L602.8 284.3 L585.2 302.3 L510.5 288.8 L483.5 315.4 L436.8 307.0 L440.8 303.1Z"/></clipPath><clipPath id="c2"><path d="M276.2 335.7 L268.4 334.2 L267.8 330.0 L268.4 325.8 L270.3 321.6 L273.4 317.5 L277.7 313.7 L283.0 310.1 L289.3 306.7 L296.5 303.8 L304.4 301.2 L312.1 302.7 L405.4 217.0 L398.0 215.6 L397.3 211.7 L397.8 207.8 L399.5 204.0 L402.3 200.2 L406.2 196.7 L411.1 193.4 L416.9 190.4 L423.6 187.7 L431.1 185.4 L594.1 215.8 L597.5 212.4 L640.7 220.5 L617.7 243.9 L688.3 257.0 L670.7 275.5 L681.6 277.6 L613.7 349.4 L602.5 347.3 L585.1 365.6 L511.1 351.9 L484.4 378.9 L438.2 370.4 L442.2 366.4Z"/></clipPath><clipPath id="c3"><path d="M279.2 397.2 L271.5 395.7 L270.9 391.4 L271.6 387.1 L273.5 382.9 L276.5 378.7 L280.7 374.8 L286.0 371.1 L292.2 367.8 L299.3 364.8 L307.2 362.2 L314.8 363.7 L407.0 276.6 L399.7 275.2 L399.0 271.3 L399.5 267.3 L401.2 263.4 L403.9 259.6 L407.8 256.0 L412.6 252.6 L418.4 249.6 L425.1 246.8 L432.4 244.5 L593.9 275.4 L597.2 272.0 L640.0 280.2 L617.2 303.9 L687.1 317.3 L669.7 336.1 L680.5 338.2 L613.2 411.1 L602.1 409.0 L584.9 427.5 L511.7 413.6 L485.4 441.1 L439.6 432.4 L443.6 428.3Z"/></clipPath><clipPath id="c4"><path d="M282.3 457.4 L274.6 455.9 L274.0 451.5 L274.7 447.2 L276.5 442.9 L279.5 438.7 L283.7 434.7 L288.9 431.0 L295.0 427.6 L302.1 424.5 L309.8 421.9 L317.4 423.4 L408.6 335.1 L401.4 333.7 L400.7 329.6 L401.2 325.6 L402.8 321.6 L405.6 317.8 L409.4 314.1 L414.2 310.7 L419.9 307.6 L426.5 304.8 L433.8 302.4 L593.6 333.8 L596.9 330.4 L639.3 338.7 L616.7 362.8 L685.9 376.4 L668.7 395.4 L679.4 397.5 L612.8 471.5 L601.8 469.4 L584.8 488.2 L512.3 474.1 L486.3 501.9 L441.0 493.1 L444.9 489.0Z"/></clipPath><clipPath id="c5"><path d="M285.2 516.4 L277.6 514.9 L277.0 510.5 L277.7 506.0 L279.5 501.7 L282.5 497.4 L286.6 493.4 L291.7 489.6 L297.8 486.2 L304.8 483.1 L312.5 480.4 L319.9 481.9 L410.2 392.4 L403.0 391.0 L402.3 386.9 L402.8 382.8 L404.4 378.7 L407.1 374.8 L410.9 371.1 L415.7 367.7 L421.4 364.5 L427.9 361.7 L435.1 359.3 L593.4 391.1 L596.7 387.6 L638.6 396.1 L616.2 420.5 L684.8 434.3 L667.7 453.6 L678.3 455.7 L612.3 530.7 L601.5 528.5 L584.6 547.6 L512.9 533.3 L487.1 561.5 L442.3 552.5 L446.2 548.4Z"/></clipPath><clipPath id="c6"><path d="M288.1 574.2 L280.6 572.6 L280.0 568.2 L280.6 563.7 L282.4 559.3 L285.4 555.0 L289.4 550.9 L294.5 547.1 L300.6 543.6 L307.4 540.5 L315.0 537.8 L322.4 539.3 L411.8 448.6 L404.6 447.2 L404.0 443.0 L404.4 438.9 L406.0 434.8 L408.7 430.8 L412.4 427.1 L417.2 423.6 L422.8 420.4 L429.2 417.5 L436.4 415.1 L593.2 447.3 L596.4 443.8 L638.0 452.3 L615.8 477.1 L683.7 491.0 L666.7 510.6 L677.2 512.7 L611.9 588.6 L601.1 586.4 L584.5 605.7 L513.5 591.3 L488.0 619.8 L443.6 610.8 L447.5 606.6Z"/></clipPath><clipPath id="c7"><path d="M290.9 630.8 L283.5 629.2 L282.9 624.7 L283.5 620.2 L285.3 615.7 L288.2 611.4 L292.2 607.3 L297.3 603.4 L303.2 599.9 L310.0 596.7 L317.6 594.0 L324.9 595.5 L413.3 503.8 L406.2 502.3 L405.5 498.1 L406.0 493.9 L407.6 489.7 L410.2 485.7 L413.9 481.9 L418.6 478.4 L424.2 475.1 L430.5 472.2 L437.6 469.8 L593.0 502.4 L596.2 498.9 L637.3 507.5 L615.4 532.6 L682.6 546.7 L665.8 566.5 L676.2 568.7 L611.5 645.4 L600.8 643.2 L584.3 662.7 L514.1 648.1 L488.8 676.9 L444.9 667.8 L448.7 663.6Z"/></clipPath><clipPath id="c8"><path d="M293.7 686.3 L286.3 684.7 L285.8 680.2 L286.3 675.6 L288.1 671.1 L291.0 666.7 L295.0 662.5 L299.9 658.6 L305.9 655.0 L312.6 651.8 L320.0 649.1 L327.3 650.6 L414.8 557.8 L407.8 556.3 L407.1 552.1 L407.6 547.8 L409.1 543.7 L411.7 539.6 L415.4 535.8 L420.0 532.2 L425.5 528.9 L431.8 526.0 L438.9 523.5 L592.7 556.5 L595.9 552.9 L636.7 561.6 L614.9 587.0 L681.5 601.2 L664.9 621.3 L675.1 623.5 L611.1 701.1 L600.5 698.8 L584.2 718.5 L514.6 703.8 L489.6 732.9 L446.2 723.7 L449.9 719.4Z"/></clipPath></defs><g stroke="#000" stroke-width="1" stroke-linejoin="round"><path d="M614.9 587.0L633.6 565.3L632.8 635.9L614.4 657.9Z" fill="#c800c8"/><path d="M614.9 587.0L681.5 601.2L680.1 672.4L614.4 657.9Z" fill="#c800c8"/><path d="M449.7 564.2L503.6 575.7L504.5 646.5L451.2 634.8Z" fill="#c800c8"/><path d="M472.0 610.0L494.8 584.9L495.7 655.8L473.3 681.3Z" fill="#c800c8"/><path d="M426.2 660.8L449.7 634.7L451.3 706.3L428.0 732.7Z" fill="#c800c8"/><path d="M362.1 658.6L418.0 670.5L419.9 742.6L364.8 730.6Z" fill="#c800c8"/><path d="M493.3 728.6L514.6 703.8L515.4 776.3L494.4 801.5Z" fill="#c800c8"/><path d="M514.6 703.8L584.2 718.5L584.0 791.3L515.4 776.3Z" fill="#c800c8"/></g><path d="M293.8 687.8 L286.4 686.3 L285.8 681.7 L286.4 677.1 L288.2 672.6 L291.1 668.2 L295.0 664.1 L300.0 660.2 L305.9 656.6 L312.7 653.4 L320.1 650.6 L327.4 652.2 L414.8 559.4 L407.8 557.9 L407.1 553.6 L407.6 549.4 L409.2 545.2 L411.8 541.1 L415.4 537.3 L420.1 533.7 L425.6 530.4 L431.9 527.5 L438.9 525.0 L592.7 558.0 L595.9 554.4 L636.7 563.2 L614.9 588.5 L681.4 602.8 L664.8 622.8 L675.1 625.0 L611.1 702.7 L600.5 700.4 L584.2 720.1 L514.7 705.3 L489.7 734.5 L446.2 725.3 L450.0 721.0Z" fill="#1a0008" stroke="#000" stroke-width="1.2" stroke-linejoin="round"/><path d="M293.7 686.3 L286.3 684.7 L285.8 680.2 L286.3 675.6 L288.1 671.1 L291.0 666.7 L295.0 662.5 L299.9 658.6 L305.9 655.0 L312.6 651.8 L320.0 649.1 L327.3 650.6 L414.8 557.8 L407.8 556.3 L407.1 552.1 L407.6 547.8 L409.1 543.7 L411.7 539.6 L415.4 535.8 L420.0 532.2 L425.5 528.9 L431.8 526.0 L438.9 523.5 L592.7 556.5 L595.9 552.9 L636.7 561.6 L614.9 587.0 L681.5 601.2 L664.9 621.3 L675.1 623.5 L611.1 701.1 L600.5 698.8 L584.2 718.5 L514.6 703.8 L489.6 732.9 L446.2 723.7 L449.9 719.4Z" fill="#e60064" stroke="#000" stroke-width="1.5" stroke-linejoin="round"/><path d="M279.1 677.7L579.1 741.3M283.4 673.2L582.9 736.7M287.7 668.7L586.7 732.1M292.0 664.1L590.5 727.5M296.3 659.7L594.3 722.9M300.5 655.2L598.0 718.4M304.8 650.7L601.8 713.8M309.0 646.3L605.5 709.3M313.2 641.8L609.3 704.8M317.4 637.4L613.0 700.3M321.6 633.0L616.7 695.8M325.8 628.6L620.4 691.3M330.0 624.2L624.0 686.8M334.1 619.8L627.7 682.4M338.3 615.5L631.4 678.0M342.4 611.1L635.0 673.5M346.5 606.8L638.6 669.1M350.6 602.5L642.3 664.7M354.7 598.2L645.9 660.4M358.8 593.9L649.5 656.0M362.8 589.7L653.1 651.6M366.9 585.4L656.6 647.3M370.9 581.2L660.2 643.0M374.9 576.9L663.8 638.7M378.9 572.7L667.3 634.4M382.9 568.5L670.8 630.1M386.9 564.3L674.4 625.8M390.9 560.1L677.9 621.6M394.9 556.0L681.4 617.3M398.8 551.8L684.9 613.1M402.7 547.7L688.3 608.9M406.7 543.5L691.8 604.7M410.6 539.4L695.3 600.5M414.5 535.3L698.7 596.3M418.4 531.2L702.1 592.1M422.2 527.2L705.6 588.0M426.1 523.1L709.0 583.8M429.9 519.1L712.4 579.7M270.4 686.8L571.4 750.6M272.3 687.5L433.8 517.5M280.8 689.3L441.7 519.2M289.2 691.1L449.6 520.9M297.6 692.9L457.5 522.6M306.0 694.6L465.4 524.3M314.4 696.4L473.3 526.0M322.9 698.2L481.2 527.7M331.3 700.0L489.0 529.4M339.7 701.8L496.9 531.1M348.1 703.6L504.8 532.8M356.5 705.3L512.7 534.4M364.9 707.1L520.6 536.1M373.3 708.9L528.4 537.8M381.7 710.7L536.3 539.5M390.1 712.5L544.2 541.2M398.5 714.2L552.1 542.9M406.9 716.0L559.9 544.6M415.3 717.8L567.8 546.3M423.7 719.6L575.7 548.0M432.1 721.3L583.5 549.7M440.5 723.1L591.4 551.4M448.8 724.9L599.3 553.0M457.2 726.7L607.1 554.7M465.6 728.5L615.0 556.4M474.0 730.2L622.8 558.1M482.4 732.0L630.7 559.8M490.7 733.8L638.6 561.5M499.1 735.6L646.4 563.2M507.5 737.3L654.3 564.9M515.9 739.1L662.1 566.5M524.2 740.9L669.9 568.2M532.6 742.6L677.8 569.9M541.0 744.4L685.6 571.6M549.3 746.2L693.5 573.3M557.7 748.0L701.3 575.0M566.0 749.7L709.2 576.6" clip-path="url(#c8)" stroke="#0a0004" stroke-width="1.65" fill="none"/><path d="M308.8 670.2L578.4 727.4M311.4 667.5L580.7 724.7M324.6 653.5L592.4 710.5M327.1 650.8L594.7 707.7M356.4 619.7L620.9 676.1M358.9 617.1L623.2 673.4M383.8 590.7L645.4 646.6M386.2 588.1L647.6 643.9M414.3 558.4L672.7 613.7M416.6 555.9L674.8 611.2M429.2 542.5L686.0 597.6M431.6 540.0L688.1 595.1" clip-path="url(#c8)" stroke="#0a0004" stroke-width="1.1" fill="none" opacity=".7"/><path d="M305.5 687.2L453.7 529.1M454.1 528.7L634.9 567.1M305.5 687.2L497.1 727.8M586.9 720.1L684.6 602.1M298.7 687.2L300.4 680.9L301.6 692.2L302.9 679.7L304.2 693.4L305.5 679.7L306.7 693.4L308.0 680.9L309.3 692.2L310.6 683.4L312.3 687.2M329.4 654.4L331.1 648.1L332.4 659.4L333.7 646.9L334.9 660.6L336.2 646.9L337.5 660.6L338.8 648.1L340.0 659.4L341.3 650.6L343.0 654.4M361.1 620.6L362.8 614.3L364.1 625.6L365.4 613.1L366.6 626.8L367.9 613.1L369.2 626.8L370.5 614.3L371.7 625.6L373.0 616.8L374.7 620.6M388.4 591.6L390.1 585.3L391.3 596.6L392.6 584.1L393.9 597.8L395.2 584.1L396.4 597.8L397.7 585.3L399.0 596.6L400.3 587.8L402.0 591.6M418.6 559.3L420.3 553.0L421.6 564.3L422.9 551.8L424.2 565.5L425.4 551.8L426.7 565.5L428.0 553.0L429.3 564.3L430.5 555.5L432.2 559.3M446.9 529.1L448.6 522.9L449.9 534.1L451.2 521.6L452.4 535.4L453.7 521.6L455.0 535.4L456.3 522.9L457.5 534.1L458.8 525.4L460.5 529.1M517.8 543.4L519.5 537.1L520.8 548.4L522.0 535.9L523.3 549.6L524.6 535.9L525.9 549.6L527.1 537.1L528.4 548.4L529.7 539.6L531.4 543.4M579.9 556.7L581.6 550.5L582.9 561.7L584.1 549.2L585.4 563.0L586.7 549.2L588.0 563.0L589.2 550.5L590.5 561.7L591.8 553.0L593.5 556.7M628.1 567.1L629.8 560.8L631.1 572.1L632.4 559.6L633.6 573.3L634.9 559.6L636.2 573.3L637.5 560.8L638.7 572.1L640.0 563.3L641.7 567.1M372.4 703.8L374.1 697.5L375.4 708.8L376.7 696.3L377.9 710.0L379.2 696.3L380.5 710.0L381.8 697.5L383.0 708.8L384.3 700.0L386.0 703.8M438.4 717.8L440.1 711.5L441.4 722.8L442.6 710.3L443.9 724.0L445.2 710.3L446.5 724.0L447.7 711.5L449.0 722.8L450.3 714.0L452.0 717.8M490.3 727.8L492.0 721.6L493.3 732.8L494.5 720.3L495.8 734.1L497.1 720.3L498.4 734.1L499.6 721.6L500.9 732.8L502.2 724.1L503.9 727.8M580.1 720.1L581.8 713.9L583.1 725.1L584.3 712.6L585.6 726.4L586.9 712.6L588.2 726.4L589.4 713.9L590.7 725.1L592.0 716.4L593.7 720.1M597.8 698.7L599.5 692.5L600.8 703.7L602.0 691.2L603.3 705.0L604.6 691.2L605.9 705.0L607.1 692.5L608.4 703.7L609.7 695.0L611.4 698.7M618.5 673.8L620.2 667.5L621.4 678.8L622.7 666.3L624.0 680.0L625.3 666.3L626.5 680.0L627.8 667.5L629.1 678.8L630.4 670.0L632.1 673.8M640.3 647.3L642.0 641.1L643.3 652.3L644.6 639.8L645.9 653.6L647.1 639.8L648.4 653.6L649.7 641.1L651.0 652.3L652.2 643.6L653.9 647.3M660.7 622.7L662.4 616.5L663.7 627.7L665.0 615.2L666.3 629.0L667.5 615.2L668.8 629.0L670.1 616.5L671.4 627.7L672.6 619.0L674.3 622.7M677.8 602.1L679.5 595.8L680.8 607.1L682.1 594.6L683.3 608.3L684.6 594.6L685.9 608.3L687.2 595.8L688.4 607.1L689.7 598.3L691.4 602.1" stroke="#4f62a8" stroke-width="1.2" fill="none" opacity=".9"/><g stroke="#000" stroke-width="1" stroke-linejoin="round"><path d="M615.4 532.6L634.2 511.1L633.6 565.3L614.9 587.0Z" fill="#c800c8"/><path d="M615.4 532.6L682.6 546.7L681.5 601.2L614.9 587.0Z" fill="#c800c8"/><path d="M448.5 510.0L503.0 521.4L503.6 575.7L449.7 564.2Z" fill="#c800c8"/><path d="M471.1 555.3L494.0 530.5L494.8 584.9L472.0 610.0Z" fill="#c800c8"/><path d="M424.7 605.5L448.6 579.8L449.7 634.7L426.2 660.8Z" fill="#c800c8"/><path d="M360.0 603.4L416.5 615.2L418.0 670.5L362.1 658.6Z" fill="#c800c8"/><path d="M492.6 672.7L514.1 648.1L514.6 703.8L493.3 728.6Z" fill="#c800c8"/><path d="M514.1 648.1L584.3 662.7L584.2 718.5L514.6 703.8Z" fill="#c800c8"/></g><path d="M291.0 632.4 L283.6 630.8 L283.0 626.3 L283.6 621.8 L285.4 617.3 L288.3 613.0 L292.3 608.9 L297.3 605.0 L303.3 601.4 L310.1 598.3 L317.6 595.6 L325.0 597.1 L413.3 505.3 L406.2 503.8 L405.6 499.6 L406.0 495.4 L407.6 491.3 L410.3 487.3 L414.0 483.5 L418.6 479.9 L424.2 476.7 L430.6 473.8 L437.7 471.3 L592.9 504.0 L596.1 500.4 L637.3 509.1 L615.3 534.1 L682.5 548.2 L665.8 568.0 L676.1 570.2 L611.5 647.0 L600.8 644.8 L584.3 664.3 L514.1 649.7 L488.8 678.5 L445.0 669.4 L448.8 665.2Z" fill="#1a0008" stroke="#000" stroke-width="1.2" stroke-linejoin="round"/><path d="M290.9 630.8 L283.5 629.2 L282.9 624.7 L283.5 620.2 L285.3 615.7 L288.2 611.4 L292.2 607.3 L297.3 603.4 L303.2 599.9 L310.0 596.7 L317.6 594.0 L324.9 595.5 L413.3 503.8 L406.2 502.3 L405.5 498.1 L406.0 493.9 L407.6 489.7 L410.2 485.7 L413.9 481.9 L418.6 478.4 L424.2 475.1 L430.5 472.2 L437.6 469.8 L593.0 502.4 L596.2 498.9 L637.3 507.5 L615.4 532.6 L682.6 546.7 L665.8 566.5 L676.2 568.7 L611.5 645.4 L600.8 643.2 L584.3 662.7 L514.1 648.1 L488.8 676.9 L444.9 667.8 L448.7 663.6Z" fill="#e60064" stroke="#000" stroke-width="1.5" stroke-linejoin="round"/><path d="M276.2 622.3L579.2 685.3M280.6 617.8L583.0 680.7M284.9 613.3L586.9 676.1M289.2 608.9L590.7 671.6M293.6 604.4L594.5 667.1M297.9 600.0L598.3 662.5M302.2 595.6L602.1 658.0M306.4 591.2L605.9 653.5M310.7 586.8L609.6 649.1M315.0 582.4L613.4 644.6M319.2 578.1L617.1 640.2M323.4 573.7L620.9 635.7M327.6 569.4L624.6 631.3M331.8 565.1L628.3 626.9M336.0 560.8L632.0 622.5M340.2 556.5L635.7 618.2M344.3 552.2L639.3 613.8M348.5 547.9L643.0 609.5M352.6 543.7L646.6 605.1M356.7 539.4L650.3 600.8M360.8 535.2L653.9 596.5M364.9 531.0L657.5 592.2M369.0 526.8L661.1 587.9M373.0 522.6L664.7 583.7M377.1 518.4L668.3 579.4M381.1 514.3L671.8 575.2M385.2 510.1L675.4 571.0M389.2 506.0L678.9 566.8M393.2 501.9L682.5 562.6M397.2 497.8L686.0 558.4M401.1 493.7L689.5 554.2M405.1 489.6L693.0 550.0M409.1 485.6L696.5 545.9M413.0 481.5L700.0 541.8M416.9 477.5L703.4 537.7M420.8 473.4L706.9 533.5M424.7 469.4L710.3 529.5M428.6 465.4L713.8 525.4M267.4 631.3L571.5 694.5M269.3 632.0L432.5 463.9M277.9 633.8L440.5 465.6M286.4 635.5L448.5 467.2M294.9 637.3L456.4 468.9M303.4 639.1L464.4 470.6M311.9 640.8L472.4 472.3M320.4 642.6L480.3 473.9M328.9 644.3L488.3 475.6M337.4 646.1L496.2 477.3M345.9 647.9L504.2 479.0M354.3 649.6L512.1 480.6M362.8 651.4L520.1 482.3M371.3 653.2L528.1 484.0M379.8 654.9L536.0 485.6M388.3 656.7L544.0 487.3M396.8 658.4L551.9 489.0M405.2 660.2L559.8 490.7M413.7 662.0L567.8 492.3M422.2 663.7L575.7 494.0M430.7 665.5L583.7 495.7M439.1 667.2L591.6 497.3M447.6 669.0L599.5 499.0M456.1 670.8L607.5 500.7M464.5 672.5L615.4 502.3M473.0 674.3L623.4 504.0M481.5 676.0L631.3 505.7M489.9 677.8L639.2 507.3M498.4 679.5L647.1 509.0M506.9 681.3L655.1 510.7M515.3 683.1L663.0 512.3M523.8 684.8L670.9 514.0M532.2 686.6L678.8 515.7M540.7 688.3L686.7 517.3M549.1 690.1L694.7 519.0M557.6 691.8L702.6 520.7M566.0 693.6L710.5 522.3" clip-path="url(#c7)" stroke="#0a0004" stroke-width="1.65" fill="none"/><path d="M306.2 614.9L578.5 671.5M308.8 612.2L580.8 668.8M322.1 598.4L592.7 654.7M324.7 595.7L595.0 652.0M354.3 564.9L621.5 620.7M356.8 562.3L623.7 618.1M382.0 536.2L646.2 591.5M384.5 533.7L648.4 588.9M412.8 504.3L673.7 559.0M415.2 501.8L675.8 556.5M427.9 488.6L687.2 543.0M430.2 486.1L689.3 540.5" clip-path="url(#c7)" stroke="#0a0004" stroke-width="1.1" fill="none" opacity=".7"/><path d="M302.8 631.7L452.6 475.4M453.1 474.9L635.5 512.9M302.8 631.7L496.4 671.9M587.1 664.3L685.7 547.5M296.0 631.7L297.7 625.4L299.0 636.7L300.2 624.2L301.5 637.9L302.8 624.2L304.1 637.9L305.3 625.4L306.6 636.7L307.9 627.9L309.6 631.7M327.1 599.2L328.8 593.0L330.1 604.2L331.3 591.7L332.6 605.5L333.9 591.7L335.2 605.5L336.4 593.0L337.7 604.2L339.0 595.5L340.7 599.2M359.1 565.8L360.8 559.5L362.1 570.8L363.4 558.3L364.7 572.0L365.9 558.3L367.2 572.0L368.5 559.5L369.8 570.8L371.0 562.0L372.7 565.8M386.7 537.1L388.4 530.8L389.6 542.1L390.9 529.6L392.2 543.3L393.5 529.6L394.7 543.3L396.0 530.8L397.3 542.1L398.6 533.3L400.3 537.1M417.3 505.2L419.0 498.9L420.2 510.2L421.5 497.7L422.8 511.4L424.1 497.7L425.3 511.4L426.6 498.9L427.9 510.2L429.2 501.4L430.9 505.2M445.8 475.4L447.5 469.1L448.8 480.4L450.1 467.9L451.3 481.6L452.6 467.9L453.9 481.6L455.2 469.1L456.4 480.4L457.7 471.6L459.4 475.4M517.3 489.5L519.0 483.2L520.3 494.5L521.6 482.0L522.9 495.7L524.1 482.0L525.4 495.7L526.7 483.2L528.0 494.5L529.2 485.7L530.9 489.5M580.0 502.7L581.7 496.4L583.0 507.7L584.3 495.2L585.6 508.9L586.8 495.2L588.1 508.9L589.4 496.4L590.7 507.7L591.9 498.9L593.6 502.7M628.7 512.9L630.4 506.6L631.7 517.9L633.0 505.4L634.3 519.1L635.5 505.4L636.8 519.1L638.1 506.6L639.4 517.9L640.6 509.1L642.3 512.9M370.5 648.1L372.2 641.8L373.5 653.1L374.7 640.6L376.0 654.3L377.3 640.6L378.6 654.3L379.8 641.8L381.1 653.1L382.4 644.3L384.1 648.1M437.1 661.9L438.8 655.7L440.1 666.9L441.4 654.4L442.6 668.2L443.9 654.4L445.2 668.2L446.5 655.7L447.7 666.9L449.0 658.2L450.7 661.9M489.6 671.9L491.3 665.6L492.5 676.9L493.8 664.4L495.1 678.1L496.4 664.4L497.6 678.1L498.9 665.6L500.2 676.9L501.5 668.1L503.2 671.9M580.3 664.3L582.0 658.0L583.2 669.3L584.5 656.8L585.8 670.5L587.1 656.8L588.3 670.5L589.6 658.0L590.9 669.3L592.2 660.5L593.9 664.3M598.1 643.1L599.8 636.8L601.1 648.1L602.4 635.6L603.7 649.3L604.9 635.6L606.2 649.3L607.5 636.8L608.8 648.1L610.0 639.3L611.7 643.1M619.0 618.4L620.7 612.1L622.0 623.4L623.3 610.9L624.6 624.6L625.8 610.9L627.1 624.6L628.4 612.1L629.7 623.4L630.9 614.6L632.6 618.4M641.1 592.3L642.8 586.0L644.1 597.3L645.4 584.8L646.6 598.5L647.9 584.8L649.2 598.5L650.5 586.0L651.7 597.3L653.0 588.5L654.7 592.3M661.7 567.9L663.4 561.7L664.7 572.9L665.9 560.4L667.2 574.2L668.5 560.4L669.8 574.2L671.0 561.7L672.3 572.9L673.6 564.2L675.3 567.9M678.9 547.5L680.6 541.3L681.9 552.5L683.2 540.0L684.5 553.8L685.7 540.0L687.0 553.8L688.3 541.3L689.6 552.5L690.8 543.8L692.5 547.5" stroke="#4f62a8" stroke-width="1.2" fill="none" opacity=".9"/><g stroke="#000" stroke-width="1" stroke-linejoin="round"><path d="M615.8 477.1L634.8 455.9L634.2 511.1L615.4 532.6Z" fill="#c800c8"/><path d="M615.8 477.1L683.7 491.0L682.6 546.7L615.4 532.6Z" fill="#c800c8"/><path d="M447.4 454.8L502.3 466.1L503.0 521.4L448.5 510.0Z" fill="#c800c8"/><path d="M470.1 499.6L493.3 475.0L494.0 530.5L471.1 555.3Z" fill="#c800c8"/><path d="M423.3 549.2L447.3 523.7L448.6 579.8L424.7 605.5Z" fill="#c800c8"/><path d="M357.9 547.1L414.9 558.7L416.5 615.2L360.0 603.4Z" fill="#c800c8"/><path d="M491.8 615.6L513.5 591.3L514.1 648.1L492.6 672.7Z" fill="#c800c8"/><path d="M513.5 591.3L584.5 605.7L584.3 662.7L514.1 648.1Z" fill="#c800c8"/></g><path d="M288.2 575.8 L280.7 574.2 L280.1 569.8 L280.7 565.3 L282.5 560.9 L285.5 556.6 L289.5 552.5 L294.6 548.7 L300.6 545.2 L307.5 542.1 L315.1 539.4 L322.5 540.9 L411.8 450.2 L404.7 448.7 L404.0 444.6 L404.5 440.4 L406.1 436.3 L408.8 432.4 L412.5 428.6 L417.2 425.1 L422.8 421.9 L429.3 419.1 L436.4 416.6 L593.2 448.9 L596.4 445.4 L637.9 453.9 L615.8 478.7 L683.6 492.6 L666.7 512.2 L677.2 514.3 L611.9 590.3 L601.1 588.1 L584.5 607.4 L513.5 592.9 L488.0 621.4 L443.7 612.4 L447.5 608.2Z" fill="#1a0008" stroke="#000" stroke-width="1.2" stroke-linejoin="round"/><path d="M288.1 574.2 L280.6 572.6 L280.0 568.2 L280.6 563.7 L282.4 559.3 L285.4 555.0 L289.4 550.9 L294.5 547.1 L300.6 543.6 L307.4 540.5 L315.0 537.8 L322.4 539.3 L411.8 448.6 L404.6 447.2 L404.0 443.0 L404.4 438.9 L406.0 434.8 L408.7 430.8 L412.4 427.1 L417.2 423.6 L422.8 420.4 L429.2 417.5 L436.4 415.1 L593.2 447.3 L596.4 443.8 L638.0 452.3 L615.8 477.1 L683.7 491.0 L666.7 510.6 L677.2 512.7 L611.9 588.6 L601.1 586.4 L584.5 605.7 L513.5 591.3 L488.0 619.8 L443.6 610.8 L447.5 606.6Z" fill="#e60064" stroke="#000" stroke-width="1.5" stroke-linejoin="round"/><path d="M273.2 565.8L579.3 628.0M277.6 561.3L583.2 623.5M282.0 556.9L587.1 619.0M286.4 552.5L590.9 614.5M290.8 548.1L594.8 610.0M295.1 543.7L598.6 605.6M299.5 539.4L602.4 601.1M303.8 535.0L606.3 596.7M308.1 530.7L610.1 592.2M312.4 526.3L613.8 587.8M316.7 522.0L617.6 583.4M321.0 517.7L621.4 579.1M325.2 513.5L625.1 574.7M329.5 509.2L628.9 570.3M333.7 504.9L632.6 566.0M337.9 500.7L636.3 561.7M342.1 496.5L640.0 557.4M346.3 492.3L643.7 553.1M350.5 488.1L647.4 548.8M354.6 483.9L651.1 544.5M358.8 479.7L654.7 540.3M362.9 475.5L658.4 536.0M367.0 471.4L662.0 531.8M371.1 467.3L665.6 527.6M375.2 463.1L669.2 523.4M379.3 459.0L672.8 519.2M383.4 454.9L676.4 515.0M387.4 450.9L680.0 510.9M391.5 446.8L683.6 506.7M395.5 442.7L687.1 502.6M399.5 438.7L690.7 498.5M403.5 434.7L694.2 494.4M407.5 430.6L697.7 490.3M411.5 426.6L701.2 486.2M415.5 422.6L704.7 482.1M419.4 418.7L708.2 478.0M423.4 414.7L711.7 474.0M427.3 410.7L715.2 470.0M264.4 574.7L571.5 637.1M266.3 575.3L431.2 409.2M274.9 577.1L439.3 410.9M283.5 578.8L447.3 412.5M292.1 580.6L455.3 414.2M300.7 582.3L463.4 415.9M309.2 584.1L471.4 417.5M317.8 585.8L479.5 419.2M326.4 587.6L487.5 420.8M335.0 589.3L495.5 422.5M343.6 591.1L503.6 424.1M352.1 592.8L511.6 425.8M360.7 594.5L519.6 427.4M369.3 596.3L527.7 429.1M377.9 598.0L535.7 430.7M386.4 599.8L543.7 432.4M395.0 601.5L551.7 434.0M403.6 603.2L559.7 435.7M412.1 605.0L567.8 437.3M420.7 606.7L575.8 439.0M429.2 608.5L583.8 440.6M437.8 610.2L591.8 442.3M446.4 611.9L599.8 443.9M454.9 613.7L607.8 445.6M463.5 615.4L615.9 447.2M472.0 617.2L623.9 448.9M480.6 618.9L631.9 450.5M489.1 620.6L639.9 452.2M497.7 622.4L647.9 453.8M506.2 624.1L655.9 455.5M514.7 625.9L663.9 457.1M523.3 627.6L671.9 458.8M531.8 629.3L679.9 460.4M540.4 631.1L687.9 462.0M548.9 632.8L695.9 463.7M557.4 634.5L703.9 465.3M566.0 636.3L711.9 467.0" clip-path="url(#c6)" stroke="#0a0004" stroke-width="1.65" fill="none"/><path d="M303.6 558.5L578.5 614.4M306.2 555.8L580.9 611.7M319.6 542.1L592.9 597.8M322.2 539.5L595.2 595.1M352.2 509.1L622.0 564.2M354.7 506.5L624.2 561.6M380.2 480.7L646.9 535.3M382.6 478.2L649.1 532.8M411.3 449.1L674.7 503.2M413.7 446.7L676.8 500.7M426.5 433.6L688.3 487.4M428.9 431.2L690.4 485.0" clip-path="url(#c6)" stroke="#0a0004" stroke-width="1.1" fill="none" opacity=".7"/><path d="M300.1 575.0L451.5 420.6M451.9 420.1L636.2 457.6M300.1 575.0L495.6 614.8M587.2 607.3L686.9 491.8M293.3 575.0L295.0 568.8L296.3 580.0L297.5 567.5L298.8 581.3L300.1 567.5L301.4 581.3L302.6 568.8L303.9 580.0L305.2 571.3L306.9 575.0M324.7 543.0L326.4 536.7L327.7 548.0L329.0 535.5L330.2 549.2L331.5 535.5L332.8 549.2L334.1 536.7L335.3 548.0L336.6 539.2L338.3 543.0M357.1 509.9L358.8 503.7L360.1 514.9L361.4 502.4L362.6 516.2L363.9 502.4L365.2 516.2L366.5 503.7L367.7 514.9L369.0 506.2L370.7 509.9M384.9 481.6L386.6 475.3L387.9 486.6L389.2 474.1L390.5 487.8L391.7 474.1L393.0 487.8L394.3 475.3L395.6 486.6L396.8 477.8L398.5 481.6M415.9 450.0L417.6 443.8L418.8 455.0L420.1 442.5L421.4 456.3L422.7 442.5L423.9 456.3L425.2 443.8L426.5 455.0L427.8 446.3L429.5 450.0M444.7 420.6L446.4 414.3L447.7 425.6L448.9 413.1L450.2 426.8L451.5 413.1L452.8 426.8L454.0 414.3L455.3 425.6L456.6 416.8L458.3 420.6M516.9 434.5L518.6 428.3L519.9 439.5L521.2 427.0L522.4 440.8L523.7 427.0L525.0 440.8L526.3 428.3L527.5 439.5L528.8 430.8L530.5 434.5M580.2 447.5L581.9 441.3L583.2 452.5L584.5 440.0L585.7 453.8L587.0 440.0L588.3 453.8L589.6 441.3L590.8 452.5L592.1 443.8L593.8 447.5M629.4 457.6L631.1 451.4L632.3 462.6L633.6 450.1L634.9 463.9L636.2 450.1L637.4 463.9L638.7 451.4L640.0 462.6L641.3 453.9L643.0 457.6M368.5 591.3L370.2 585.0L371.5 596.3L372.8 583.8L374.0 597.5L375.3 583.8L376.6 597.5L377.9 585.0L379.1 596.3L380.4 587.5L382.1 591.3M435.8 605.0L437.5 598.7L438.8 610.0L440.1 597.5L441.3 611.2L442.6 597.5L443.9 611.2L445.2 598.7L446.4 610.0L447.7 601.2L449.4 605.0M488.8 614.8L490.5 608.5L491.8 619.8L493.0 607.3L494.3 621.0L495.6 607.3L496.9 621.0L498.1 608.5L499.4 619.8L500.7 611.0L502.4 614.8M580.4 607.3L582.1 601.0L583.4 612.3L584.7 599.8L586.0 613.5L587.2 599.8L588.5 613.5L589.8 601.0L591.1 612.3L592.3 603.5L594.0 607.3M598.5 586.3L600.2 580.1L601.5 591.3L602.7 578.8L604.0 592.6L605.3 578.8L606.6 592.6L607.8 580.1L609.1 591.3L610.4 582.6L612.1 586.3M619.6 561.9L621.3 555.6L622.6 566.9L623.8 554.4L625.1 568.1L626.4 554.4L627.7 568.1L628.9 555.6L630.2 566.9L631.5 558.1L633.2 561.9M641.9 536.1L643.6 529.8L644.9 541.1L646.1 528.6L647.4 542.3L648.7 528.6L650.0 542.3L651.2 529.8L652.5 541.1L653.8 532.3L655.5 536.1M662.7 512.0L664.4 505.8L665.6 517.0L666.9 504.5L668.2 518.3L669.5 504.5L670.7 518.3L672.0 505.8L673.3 517.0L674.6 508.3L676.3 512.0M680.1 491.8L681.8 485.6L683.0 496.8L684.3 484.3L685.6 498.1L686.9 484.3L688.1 498.1L689.4 485.6L690.7 496.8L692.0 488.1L693.7 491.8" stroke="#4f62a8" stroke-width="1.2" fill="none" opacity=".9"/><g stroke="#000" stroke-width="1" stroke-linejoin="round"><path d="M616.2 420.5L635.4 399.6L634.8 455.9L615.8 477.1Z" fill="#c800c8"/><path d="M616.2 420.5L684.8 434.3L683.7 491.0L615.8 477.1Z" fill="#c800c8"/><path d="M446.2 398.5L501.7 409.6L502.3 466.1L447.4 454.8Z" fill="#c800c8"/><path d="M469.1 442.7L492.5 418.5L493.3 475.0L470.1 499.6Z" fill="#c800c8"/><path d="M421.8 491.7L446.1 466.5L447.3 523.7L423.3 549.2Z" fill="#c800c8"/><path d="M355.7 489.7L413.3 501.1L414.9 558.7L357.9 547.1Z" fill="#c800c8"/><path d="M490.9 557.3L512.9 533.3L513.5 591.3L491.8 615.6Z" fill="#c800c8"/><path d="M512.9 533.3L584.6 547.6L584.5 605.7L513.5 591.3Z" fill="#c800c8"/></g><path d="M285.3 518.0 L277.7 516.5 L277.1 512.1 L277.8 507.7 L279.6 503.3 L282.6 499.1 L286.7 495.1 L291.8 491.3 L297.9 487.8 L304.9 484.7 L312.5 482.1 L320.0 483.6 L410.3 394.0 L403.1 392.6 L402.4 388.5 L402.9 384.4 L404.5 380.4 L407.2 376.5 L411.0 372.7 L415.7 369.3 L421.4 366.1 L427.9 363.3 L435.1 360.9 L593.4 392.7 L596.7 389.2 L638.6 397.7 L616.2 422.1 L684.8 435.9 L667.7 455.2 L678.2 457.3 L612.3 532.3 L601.4 530.2 L584.6 549.2 L513.0 534.9 L487.1 563.1 L442.4 554.2 L446.2 550.1Z" fill="#1a0008" stroke="#000" stroke-width="1.2" stroke-linejoin="round"/><path d="M285.2 516.4 L277.6 514.9 L277.0 510.5 L277.7 506.0 L279.5 501.7 L282.5 497.4 L286.6 493.4 L291.7 489.6 L297.8 486.2 L304.8 483.1 L312.5 480.4 L319.9 481.9 L410.2 392.4 L403.0 391.0 L402.3 386.9 L402.8 382.8 L404.4 378.7 L407.1 374.8 L410.9 371.1 L415.7 367.7 L421.4 364.5 L427.9 361.7 L435.1 359.3 L593.4 391.1 L596.7 387.6 L638.6 396.1 L616.2 420.5 L684.8 434.3 L667.7 453.6 L678.3 455.7 L612.3 530.7 L601.5 528.5 L584.6 547.6 L512.9 533.3 L487.1 561.5 L442.3 552.5 L446.2 548.4Z" fill="#e60064" stroke="#000" stroke-width="1.5" stroke-linejoin="round"/><path d="M270.2 508.1L579.4 569.6M274.7 503.7L583.3 565.1M279.1 499.3L587.2 560.7M283.5 495.0L591.1 556.2M288.0 490.6L595.0 551.8M292.4 486.3L598.9 547.4M296.7 482.0L602.8 543.0M301.1 477.7L606.6 538.6M305.5 473.4L610.5 534.2M309.8 469.1L614.3 529.9M314.2 464.9L618.1 525.5M318.5 460.6L621.9 521.2M322.8 456.4L625.7 516.9M327.1 452.2L629.5 512.6M331.3 448.0L633.2 508.3M335.6 443.8L637.0 504.0M339.8 439.6L640.7 499.8M344.1 435.5L644.5 495.5M348.3 431.3L648.2 491.3M352.5 427.2L651.9 487.1M356.7 423.1L655.6 482.9M360.9 419.0L659.3 478.7M365.0 414.9L662.9 474.5M369.2 410.8L666.6 470.4M373.3 406.7L670.2 466.2M377.4 402.7L673.9 462.1M381.6 398.6L677.5 458.0M385.6 394.6L681.1 453.9M389.7 390.6L684.7 449.8M393.8 386.6L688.3 445.7M397.9 382.6L691.9 441.6M401.9 378.6L695.4 437.6M405.9 374.7L699.0 433.5M410.0 370.7L702.5 429.5M414.0 366.8L706.1 425.5M418.0 362.9L709.6 421.5M421.9 358.9L713.1 417.5M425.9 355.0L716.6 413.5M261.2 516.9L571.5 578.6M263.2 517.5L429.9 353.5M271.9 519.3L438.0 355.2M280.5 521.0L446.1 356.8M289.2 522.7L454.2 358.4M297.9 524.4L462.4 360.1M306.6 526.2L470.5 361.7M315.2 527.9L478.6 363.3M323.9 529.6L486.7 365.0M332.6 531.3L494.8 366.6M341.2 533.1L502.9 368.2M349.9 534.8L511.0 369.9M358.6 536.5L519.1 371.5M367.2 538.2L527.2 373.1M375.9 540.0L535.3 374.8M384.5 541.7L543.4 376.4M393.2 543.4L551.5 378.0M401.8 545.1L559.6 379.6M410.5 546.8L567.7 381.3M419.1 548.6L575.8 382.9M427.8 550.3L583.9 384.5M436.4 552.0L592.0 386.2M445.1 553.7L600.1 387.8M453.7 555.4L608.2 389.4M462.4 557.1L616.3 391.0M471.0 558.9L624.4 392.7M479.6 560.6L632.5 394.3M488.3 562.3L640.6 395.9M496.9 564.0L648.6 397.5M505.5 565.7L656.7 399.2M514.2 567.4L664.8 400.8M522.8 569.2L672.9 402.4M531.4 570.9L681.0 404.0M540.0 572.6L689.0 405.7M548.7 574.3L697.1 407.3M557.3 576.0L705.2 408.9M565.9 577.7L713.3 410.5" clip-path="url(#c5)" stroke="#0a0004" stroke-width="1.65" fill="none"/><path d="M300.8 500.9L578.6 556.2M303.5 498.2L581.0 553.5M317.1 484.7L593.1 539.8M319.7 482.1L595.5 537.1M350.0 452.1L622.5 506.5M352.6 449.6L624.8 503.9M378.3 424.1L647.7 478.0M380.8 421.6L649.9 475.5M409.7 392.9L675.7 446.3M412.1 390.5L677.9 443.8M425.1 377.6L689.5 430.7M427.5 375.2L691.6 428.3" clip-path="url(#c5)" stroke="#0a0004" stroke-width="1.1" fill="none" opacity=".7"/><path d="M297.3 517.2L450.3 364.8M450.8 364.3L636.8 401.3M297.3 517.2L494.8 556.5M587.4 549.1L688.0 435.1M290.5 517.2L292.2 511.0L293.5 522.2L294.8 509.7L296.0 523.5L297.3 509.7L298.6 523.5L299.9 511.0L301.1 522.2L302.4 513.5L304.1 517.2M322.3 485.6L324.0 479.3L325.3 490.6L326.6 478.1L327.8 491.8L329.1 478.1L330.4 491.8L331.7 479.3L332.9 490.6L334.2 481.8L335.9 485.6M355.1 452.9L356.8 446.7L358.0 457.9L359.3 445.4L360.6 459.2L361.9 445.4L363.1 459.2L364.4 446.7L365.7 457.9L367.0 449.2L368.7 452.9M383.2 424.9L384.9 418.7L386.1 429.9L387.4 417.4L388.7 431.2L390.0 417.4L391.2 431.2L392.5 418.7L393.8 429.9L395.1 421.2L396.8 424.9M414.4 393.8L416.1 387.5L417.4 398.8L418.7 386.3L419.9 400.0L421.2 386.3L422.5 400.0L423.8 387.5L425.0 398.8L426.3 390.0L428.0 393.8M443.5 364.8L445.2 358.5L446.5 369.8L447.8 357.3L449.1 371.0L450.3 357.3L451.6 371.0L452.9 358.5L454.2 369.8L455.4 361.0L457.1 364.8M516.5 378.5L518.2 372.2L519.4 383.5L520.7 371.0L522.0 384.7L523.3 371.0L524.5 384.7L525.8 372.2L527.1 383.5L528.4 374.7L530.1 378.5M580.4 391.3L582.1 385.1L583.3 396.3L584.6 383.8L585.9 397.6L587.2 383.8L588.4 397.6L589.7 385.1L591.0 396.3L592.3 387.6L594.0 391.3M630.0 401.3L631.7 395.1L633.0 406.3L634.3 393.8L635.5 407.6L636.8 393.8L638.1 407.6L639.4 395.1L640.6 406.3L641.9 397.6L643.6 401.3M366.5 533.3L368.2 527.0L369.5 538.3L370.8 525.8L372.0 539.5L373.3 525.8L374.6 539.5L375.9 527.0L377.1 538.3L378.4 529.5L380.1 533.3M434.5 546.8L436.2 540.6L437.5 551.8L438.7 539.3L440.0 553.1L441.3 539.3L442.6 553.1L443.8 540.6L445.1 551.8L446.4 543.1L448.1 546.8M488.0 556.5L489.7 550.3L491.0 561.5L492.3 549.0L493.5 562.8L494.8 549.0L496.1 562.8L497.4 550.3L498.6 561.5L499.9 552.8L501.6 556.5M580.6 549.1L582.3 542.8L583.6 554.1L584.9 541.6L586.1 555.3L587.4 541.6L588.7 555.3L590.0 542.8L591.2 554.1L592.5 545.3L594.2 549.1M598.9 528.4L600.6 522.1L601.8 533.4L603.1 520.9L604.4 534.6L605.7 520.9L606.9 534.6L608.2 522.1L609.5 533.4L610.8 524.6L612.5 528.4M620.2 504.3L621.9 498.0L623.1 509.3L624.4 496.8L625.7 510.5L627.0 496.8L628.2 510.5L629.5 498.0L630.8 509.3L632.1 500.5L633.8 504.3M642.7 478.8L644.4 472.5L645.7 483.8L646.9 471.3L648.2 485.0L649.5 471.3L650.8 485.0L652.0 472.5L653.3 483.8L654.6 475.0L656.3 478.8M663.7 455.0L665.4 448.7L666.6 460.0L667.9 447.5L669.2 461.2L670.5 447.5L671.7 461.2L673.0 448.7L674.3 460.0L675.6 451.2L677.3 455.0M681.2 435.1L682.9 428.8L684.2 440.1L685.5 427.6L686.8 441.3L688.0 427.6L689.3 441.3L690.6 428.8L691.9 440.1L693.1 431.3L694.8 435.1" stroke="#4f62a8" stroke-width="1.2" fill="none" opacity=".9"/><g stroke="#000" stroke-width="1" stroke-linejoin="round"><path d="M616.7 362.8L636.1 342.1L635.4 399.6L616.2 420.5Z" fill="#c800c8"/><path d="M616.7 362.8L685.9 376.4L684.8 434.3L616.2 420.5Z" fill="#c800c8"/><path d="M444.9 341.1L501.0 352.1L501.7 409.6L446.2 398.5Z" fill="#c800c8"/><path d="M468.1 384.7L491.8 360.8L492.5 418.5L469.1 442.7Z" fill="#c800c8"/><path d="M420.3 433.1L444.9 408.2L446.1 466.5L421.8 491.7Z" fill="#c800c8"/><path d="M353.5 431.0L411.7 442.4L413.3 501.1L355.7 489.7Z" fill="#c800c8"/><path d="M490.1 497.8L512.3 474.1L512.9 533.3L490.9 557.3Z" fill="#c800c8"/><path d="M512.3 474.1L584.8 488.2L584.6 547.6L512.9 533.3Z" fill="#c800c8"/></g><path d="M282.3 459.1 L274.7 457.6 L274.1 453.2 L274.7 448.9 L276.6 444.6 L279.6 440.4 L283.8 436.4 L289.0 432.7 L295.1 429.3 L302.1 426.2 L309.9 423.6 L317.5 425.1 L408.7 336.7 L401.4 335.3 L400.7 331.3 L401.2 327.2 L402.9 323.3 L405.6 319.4 L409.4 315.8 L414.2 312.3 L420.0 309.2 L426.5 306.4 L433.8 304.1 L593.6 335.5 L596.9 332.0 L639.3 340.3 L616.7 364.4 L685.9 378.0 L668.7 397.1 L679.3 399.2 L612.8 473.2 L601.8 471.1 L584.8 489.9 L512.4 475.8 L486.3 503.6 L441.0 494.8 L444.9 490.7Z" fill="#1a0008" stroke="#000" stroke-width="1.2" stroke-linejoin="round"/><path d="M282.3 457.4 L274.6 455.9 L274.0 451.5 L274.7 447.2 L276.5 442.9 L279.5 438.7 L283.7 434.7 L288.9 431.0 L295.0 427.6 L302.1 424.5 L309.8 421.9 L317.4 423.4 L408.6 335.1 L401.4 333.7 L400.7 329.6 L401.2 325.6 L402.8 321.6 L405.6 317.8 L409.4 314.1 L414.2 310.7 L419.9 307.6 L426.5 304.8 L433.8 302.4 L593.6 333.8 L596.9 330.4 L639.3 338.7 L616.7 362.8 L685.9 376.4 L668.7 395.4 L679.4 397.5 L612.8 471.5 L601.8 469.4 L584.8 488.2 L512.3 474.1 L486.3 501.9 L441.0 493.1 L444.9 489.0Z" fill="#e60064" stroke="#000" stroke-width="1.5" stroke-linejoin="round"/><path d="M267.1 449.2L579.5 509.9M271.6 444.9L583.5 505.5M276.1 440.6L587.4 501.1M280.6 436.3L591.4 496.7M285.1 432.0L595.3 492.4M289.5 427.7L599.2 488.0M294.0 423.5L603.1 483.7M298.4 419.2L607.0 479.3M302.8 415.0L610.9 475.0M307.2 410.8L614.8 470.7M311.6 406.6L618.6 466.4M315.9 402.4L622.5 462.2M320.3 398.2L626.3 457.9M324.6 394.1L630.1 453.7M328.9 389.9L633.9 449.4M333.2 385.8L637.7 445.2M337.5 381.7L641.5 441.0M341.8 377.6L645.2 436.8M346.1 373.5L649.0 432.7M350.3 369.4L652.7 428.5M354.6 365.3L656.5 424.4M358.8 361.3L660.2 420.2M363.0 357.3L663.9 416.1M367.2 353.2L667.6 412.0M371.4 349.2L671.3 407.9M375.5 345.2L674.9 403.8M379.7 341.2L678.6 399.8M383.8 337.3L682.2 395.7M388.0 333.3L685.9 391.7M392.1 329.4L689.5 387.6M396.2 325.4L693.1 383.6M400.3 321.5L696.7 379.6M404.3 317.6L700.3 375.6M408.4 313.7L703.9 371.7M412.4 309.8L707.4 367.7M416.5 306.0L711.0 363.7M420.5 302.1L714.5 359.8M424.5 298.3L718.0 355.9M258.0 457.9L571.5 518.8M260.0 458.5L428.5 296.8M268.8 460.2L436.7 298.4M277.5 462.0L444.9 300.0M286.3 463.7L453.1 301.6M295.1 465.4L461.3 303.2M303.8 467.1L469.5 304.8M312.6 468.8L477.7 306.4M321.3 470.5L485.9 308.0M330.1 472.2L494.1 309.7M338.8 473.9L502.3 311.3M347.6 475.6L510.5 312.9M356.3 477.3L518.6 314.5M365.1 479.0L526.8 316.1M373.8 480.7L535.0 317.7M382.6 482.4L543.2 319.3M391.3 484.1L551.4 320.9M400.1 485.8L559.5 322.5M408.8 487.5L567.7 324.1M417.6 489.2L575.9 325.7M426.3 490.9L584.1 327.3M435.0 492.6L592.2 328.9M443.8 494.2L600.4 330.5M452.5 495.9L608.6 332.1M461.2 497.6L616.8 333.7M470.0 499.3L624.9 335.3M478.7 501.0L633.1 336.9M487.4 502.7L641.3 338.5M496.1 504.4L649.4 340.2M504.9 506.1L657.6 341.8M513.6 507.8L665.7 343.4M522.3 509.5L673.9 345.0M531.0 511.2L682.1 346.6M539.7 512.9L690.2 348.2M548.4 514.6L698.4 349.8M557.2 516.3L706.5 351.4M565.9 518.0L714.7 353.0" clip-path="url(#c4)" stroke="#0a0004" stroke-width="1.65" fill="none"/><path d="M298.1 442.1L578.7 496.7M300.8 439.5L581.1 494.0M314.5 426.2L593.4 480.5M317.2 423.6L595.7 477.9M347.8 394.0L623.0 447.7M350.4 391.5L625.3 445.1M376.4 366.3L648.5 419.5M378.9 363.9L650.8 417.0M408.1 335.6L676.8 388.2M410.6 333.2L679.0 385.8M423.7 320.5L690.7 372.9M426.1 318.2L692.8 370.5" clip-path="url(#c4)" stroke="#0a0004" stroke-width="1.1" fill="none" opacity=".7"/><path d="M294.5 458.2L449.2 307.8M449.6 307.4L637.5 343.9M294.5 458.2L494.0 497.0M587.6 489.7L689.2 377.2M287.7 458.2L289.4 452.0L290.7 463.2L291.9 450.7L293.2 464.5L294.5 450.7L295.8 464.5L297.0 452.0L298.3 463.2L299.6 454.5L301.3 458.2M319.8 427.0L321.5 420.7L322.8 432.0L324.1 419.5L325.4 433.2L326.6 419.5L327.9 433.2L329.2 420.7L330.5 432.0L331.7 423.2L333.4 427.0M353.0 394.8L354.7 388.5L355.9 399.8L357.2 387.3L358.5 401.0L359.8 387.3L361.0 401.0L362.3 388.5L363.6 399.8L364.9 391.0L366.6 394.8M381.4 367.2L383.1 360.9L384.3 372.2L385.6 359.7L386.9 373.4L388.2 359.7L389.4 373.4L390.7 360.9L392.0 372.2L393.3 363.4L395.0 367.2M413.0 336.4L414.7 330.2L415.9 341.4L417.2 328.9L418.5 342.7L419.8 328.9L421.0 342.7L422.3 330.2L423.6 341.4L424.9 332.7L426.6 336.4M442.4 307.8L444.1 301.6L445.4 312.8L446.6 300.3L447.9 314.1L449.2 300.3L450.5 314.1L451.7 301.6L453.0 312.8L454.3 304.1L456.0 307.8M516.0 321.4L517.7 315.1L519.0 326.4L520.3 313.9L521.5 327.6L522.8 313.9L524.1 327.6L525.4 315.1L526.6 326.4L527.9 317.6L529.6 321.4M580.5 334.0L582.2 327.8L583.5 339.0L584.8 326.5L586.1 340.3L587.3 326.5L588.6 340.3L589.9 327.8L591.2 339.0L592.4 330.3L594.1 334.0M630.7 343.9L632.4 337.6L633.7 348.9L634.9 336.4L636.2 350.1L637.5 336.4L638.8 350.1L640.0 337.6L641.3 348.9L642.6 340.1L644.3 343.9M364.5 474.1L366.2 467.8L367.4 479.1L368.7 466.6L370.0 480.3L371.3 466.6L372.5 480.3L373.8 467.8L375.1 479.1L376.4 470.3L378.1 474.1M433.1 487.4L434.8 481.2L436.1 492.4L437.4 479.9L438.7 493.7L439.9 479.9L441.2 493.7L442.5 481.2L443.8 492.4L445.0 483.7L446.7 487.4M487.2 497.0L488.9 490.8L490.2 502.0L491.5 489.5L492.8 503.3L494.0 489.5L495.3 503.3L496.6 490.8L497.9 502.0L499.1 493.3L500.8 497.0M580.8 489.7L582.5 483.4L583.8 494.7L585.0 482.2L586.3 495.9L587.6 482.2L588.9 495.9L590.1 483.4L591.4 494.7L592.7 485.9L594.4 489.7M599.2 469.3L600.9 463.0L602.2 474.3L603.5 461.8L604.8 475.5L606.0 461.8L607.3 475.5L608.6 463.0L609.9 474.3L611.1 465.5L612.8 469.3M620.8 445.4L622.5 439.2L623.7 450.4L625.0 437.9L626.3 451.7L627.6 437.9L628.8 451.7L630.1 439.2L631.4 450.4L632.7 441.7L634.4 445.4M643.5 420.3L645.2 414.0L646.5 425.3L647.7 412.8L649.0 426.5L650.3 412.8L651.6 426.5L652.8 414.0L654.1 425.3L655.4 416.5L657.1 420.3M664.7 396.8L666.4 390.6L667.6 401.8L668.9 389.3L670.2 403.1L671.5 389.3L672.7 403.1L674.0 390.6L675.3 401.8L676.6 393.1L678.3 396.8M682.4 377.2L684.1 370.9L685.4 382.2L686.7 369.7L687.9 383.4L689.2 369.7L690.5 383.4L691.8 370.9L693.0 382.2L694.3 373.4L696.0 377.2" stroke="#4f62a8" stroke-width="1.2" fill="none" opacity=".9"/><g stroke="#000" stroke-width="1" stroke-linejoin="round"><path d="M617.2 303.9L636.7 283.6L636.1 342.1L616.7 362.8Z" fill="#c800c8"/><path d="M617.2 303.9L687.1 317.3L685.9 376.4L616.7 362.8Z" fill="#c800c8"/><path d="M443.7 282.6L500.3 293.4L501.0 352.1L444.9 341.1Z" fill="#c800c8"/><path d="M467.1 325.5L491.0 302.0L491.8 360.8L468.1 384.7Z" fill="#c800c8"/><path d="M418.7 373.2L443.6 348.7L444.9 408.2L420.3 433.1Z" fill="#c800c8"/><path d="M351.3 371.2L410.1 382.4L411.7 442.4L353.5 431.0Z" fill="#c800c8"/><path d="M489.3 437.0L511.7 413.6L512.3 474.1L490.1 497.8Z" fill="#e60064"/><path d="M511.7 413.6L584.9 427.5L584.8 488.2L512.3 474.1Z" fill="#c800c8"/></g><path d="M279.3 398.9 L271.6 397.4 L271.0 393.1 L271.7 388.8 L273.5 384.6 L276.6 380.5 L280.8 376.5 L286.1 372.9 L292.3 369.5 L299.4 366.5 L307.2 363.9 L314.9 365.4 L407.1 278.3 L399.7 276.9 L399.1 272.9 L399.6 269.0 L401.2 265.0 L404.0 261.2 L407.8 257.6 L412.7 254.3 L418.5 251.2 L425.1 248.5 L432.5 246.1 L593.9 277.1 L597.2 273.7 L640.0 281.9 L617.2 305.6 L687.1 319.0 L669.7 337.8 L680.5 339.9 L613.2 412.8 L602.1 410.7 L584.9 429.3 L511.8 415.4 L485.4 442.8 L439.6 434.1 L443.6 430.1Z" fill="#1a0008" stroke="#000" stroke-width="1.2" stroke-linejoin="round"/><path d="M279.2 397.2 L271.5 395.7 L270.9 391.4 L271.6 387.1 L273.5 382.9 L276.5 378.7 L280.7 374.8 L286.0 371.1 L292.2 367.8 L299.3 364.8 L307.2 362.2 L314.8 363.7 L407.0 276.6 L399.7 275.2 L399.0 271.3 L399.5 267.3 L401.2 263.4 L403.9 259.6 L407.8 256.0 L412.6 252.6 L418.4 249.6 L425.1 246.8 L432.4 244.5 L593.9 275.4 L597.2 272.0 L640.0 280.2 L617.2 303.9 L687.1 317.3 L669.7 336.1 L680.5 338.2 L613.2 411.1 L602.1 409.0 L584.9 427.5 L511.7 413.6 L485.4 441.1 L439.6 432.4 L443.6 428.3Z" fill="#e60064" stroke="#000" stroke-width="1.5" stroke-linejoin="round"/><path d="M263.9 389.1L579.6 449.0M268.5 384.8L583.6 444.7M273.1 380.6L587.6 440.3M277.6 376.4L591.6 436.0M282.1 372.1L595.6 431.7M286.6 367.9L599.5 427.4M291.1 363.7L603.5 423.1M295.6 359.5L607.4 418.8M300.0 355.4L611.3 414.6M304.5 351.2L615.2 410.3M308.9 347.1L619.1 406.1M313.3 343.0L623.0 401.9M317.7 338.8L626.9 397.7M322.1 334.7L630.7 393.5M326.5 330.7L634.6 389.3M330.8 326.6L638.4 385.2M335.2 322.5L642.2 381.0M339.5 318.5L646.0 376.9M343.8 314.5L649.8 372.8M348.1 310.4L653.6 368.7M352.4 306.4L657.4 364.6M356.7 302.4L661.1 360.5M360.9 298.5L664.9 356.5M365.2 294.5L668.6 352.4M369.4 290.6L672.3 348.4M373.6 286.6L676.0 344.4M377.8 282.7L679.7 340.4M382.0 278.8L683.4 336.4M386.2 274.9L687.0 332.4M390.3 271.0L690.7 328.4M394.5 267.1L694.3 324.5M398.6 263.3L698.0 320.5M402.7 259.4L701.6 316.6M406.8 255.6L705.2 312.7M410.9 251.7L708.8 308.8M415.0 247.9L712.4 304.9M419.0 244.1L716.0 301.0M423.1 240.3L719.5 297.1M254.8 397.7L571.5 457.8M256.8 398.3L427.1 238.9M265.6 400.0L435.4 240.5M274.5 401.7L443.7 242.1M283.3 403.4L452.0 243.7M292.2 405.0L460.2 245.2M301.0 406.7L468.5 246.8M309.9 408.4L476.8 248.4M318.7 410.1L485.1 250.0M327.6 411.7L493.3 251.6M336.4 413.4L501.6 253.2M345.3 415.1L509.9 254.7M354.1 416.8L518.1 256.3M362.9 418.5L526.4 257.9M371.8 420.1L534.7 259.5M380.6 421.8L542.9 261.1M389.4 423.5L551.2 262.7M398.3 425.2L559.4 264.2M407.1 426.8L567.7 265.8M415.9 428.5L576.0 267.4M424.8 430.2L584.2 269.0M433.6 431.9L592.5 270.6M442.4 433.5L600.7 272.1M451.2 435.2L609.0 273.7M460.1 436.9L617.2 275.3M468.9 438.5L625.5 276.9M477.7 440.2L633.7 278.5M486.5 441.9L642.0 280.0M495.3 443.6L650.2 281.6M504.2 445.2L658.5 283.2M513.0 446.9L666.7 284.8M521.8 448.6L674.9 286.4M530.6 450.3L683.2 287.9M539.4 451.9L691.4 289.5M548.2 453.6L699.7 291.1M557.0 455.3L707.9 292.7M565.8 456.9L716.1 294.2" clip-path="url(#c3)" stroke="#0a0004" stroke-width="1.65" fill="none"/><path d="M295.3 382.1L578.8 435.9M298.0 379.5L581.2 433.3M311.9 366.4L593.6 419.9M314.6 363.9L596.0 417.4M345.6 334.6L623.6 387.6M348.2 332.2L625.9 385.1M374.4 307.4L649.3 359.8M377.0 305.0L651.6 357.4M406.5 277.1L677.9 329.0M409.0 274.8L680.1 326.6M422.3 262.3L691.9 313.9M424.7 260.0L694.1 311.5" clip-path="url(#c3)" stroke="#0a0004" stroke-width="1.1" fill="none" opacity=".7"/><path d="M291.6 398.0L448.0 249.8M448.5 249.3L638.2 285.3M291.6 398.0L493.2 436.3M587.8 429.0L690.4 318.1M284.8 398.0L286.5 391.8L287.8 403.0L289.1 390.5L290.3 404.3L291.6 390.5L292.9 404.3L294.2 391.8L295.4 403.0L296.7 394.3L298.4 398.0M317.3 367.2L319.0 360.9L320.3 372.2L321.6 359.7L322.9 373.4L324.1 359.7L325.4 373.4L326.7 360.9L328.0 372.2L329.2 363.4L330.9 367.2M350.8 335.4L352.5 329.2L353.8 340.4L355.1 327.9L356.3 341.7L357.6 327.9L358.9 341.7L360.2 329.2L361.4 340.4L362.7 331.7L364.4 335.4M379.5 308.2L381.2 302.0L382.5 313.2L383.8 300.7L385.1 314.5L386.3 300.7L387.6 314.5L388.9 302.0L390.2 313.2L391.4 304.5L393.1 308.2M411.5 278.0L413.2 271.7L414.4 283.0L415.7 270.5L417.0 284.2L418.3 270.5L419.5 284.2L420.8 271.7L422.1 283.0L423.4 274.2L425.1 278.0M441.2 249.8L442.9 243.5L444.2 254.8L445.4 242.3L446.7 256.0L448.0 242.3L449.3 256.0L450.5 243.5L451.8 254.8L453.1 246.0L454.8 249.8M515.5 263.1L517.2 256.9L518.5 268.1L519.8 255.6L521.1 269.4L522.3 255.6L523.6 269.4L524.9 256.9L526.2 268.1L527.4 259.4L529.1 263.1M580.7 275.6L582.4 269.3L583.7 280.6L585.0 268.1L586.2 281.8L587.5 268.1L588.8 281.8L590.1 269.3L591.3 280.6L592.6 271.8L594.3 275.6M631.4 285.3L633.1 279.0L634.3 290.3L635.6 277.8L636.9 291.5L638.2 277.8L639.4 291.5L640.7 279.0L642.0 290.3L643.3 281.5L645.0 285.3M362.4 413.6L364.1 407.4L365.3 418.6L366.6 406.1L367.9 419.9L369.2 406.1L370.4 419.9L371.7 407.4L373.0 418.6L374.3 409.9L376.0 413.6M431.8 426.8L433.5 420.5L434.7 431.8L436.0 419.3L437.3 433.0L438.6 419.3L439.8 433.0L441.1 420.5L442.4 431.8L443.7 423.0L445.4 426.8M486.4 436.3L488.1 430.0L489.4 441.3L490.7 428.8L492.0 442.5L493.2 428.8L494.5 442.5L495.8 430.0L497.1 441.3L498.3 432.5L500.0 436.3M581.0 429.0L582.7 422.8L583.9 434.0L585.2 421.5L586.5 435.3L587.8 421.5L589.0 435.3L590.3 422.8L591.6 434.0L592.9 425.3L594.6 429.0M599.6 408.9L601.3 402.6L602.6 413.9L603.9 401.4L605.1 415.1L606.4 401.4L607.7 415.1L609.0 402.6L610.2 413.9L611.5 405.1L613.2 408.9M621.4 385.4L623.1 379.1L624.3 390.4L625.6 377.9L626.9 391.6L628.2 377.9L629.4 391.6L630.7 379.1L632.0 390.4L633.3 381.6L635.0 385.4M644.3 360.6L646.0 354.3L647.3 365.6L648.6 353.1L649.8 366.8L651.1 353.1L652.4 366.8L653.7 354.3L654.9 365.6L656.2 356.8L657.9 360.6M665.7 337.5L667.4 331.2L668.7 342.5L670.0 330.0L671.2 343.7L672.5 330.0L673.8 343.7L675.1 331.2L676.3 342.5L677.6 333.7L679.3 337.5M683.6 318.1L685.3 311.8L686.6 323.1L687.9 310.6L689.1 324.3L690.4 310.6L691.7 324.3L693.0 311.8L694.2 323.1L695.5 314.3L697.2 318.1" stroke="#4f62a8" stroke-width="1.2" fill="none" opacity=".9"/><g stroke="#000" stroke-width="1" stroke-linejoin="round"><path d="M617.7 243.9L637.4 223.8L636.7 283.6L617.2 303.9Z" fill="#c800c8"/><path d="M617.7 243.9L688.3 257.0L687.1 317.3L617.2 303.9Z" fill="#c800c8"/><path d="M442.4 222.8L499.6 233.5L500.3 293.4L443.7 282.6Z" fill="#c800c8"/><path d="M466.0 265.1L490.2 241.9L491.0 302.0L467.1 325.5Z" fill="#c800c8"/><path d="M417.1 312.1L442.3 287.9L443.6 348.7L418.7 373.2Z" fill="#c800c8"/><path d="M349.0 310.1L408.4 321.1L410.1 382.4L351.3 371.2Z" fill="#c800c8"/><path d="M488.4 374.9L511.1 351.9L511.7 413.6L489.3 437.0Z" fill="#e60064"/><path d="M511.1 351.9L585.1 365.6L584.9 427.5L511.7 413.6Z" fill="#c800c8"/></g><path d="M276.3 337.4 L268.5 336.0 L267.9 331.8 L268.5 327.5 L270.4 323.3 L273.5 319.3 L277.8 315.4 L283.1 311.8 L289.4 308.5 L296.6 305.5 L304.5 303.0 L312.2 304.4 L405.5 218.7 L398.0 217.3 L397.4 213.4 L397.9 209.5 L399.5 205.7 L402.3 201.9 L406.2 198.4 L411.1 195.1 L417.0 192.0 L423.7 189.4 L431.1 187.0 L594.1 217.5 L597.5 214.1 L640.7 222.2 L617.6 245.6 L688.3 258.8 L670.7 277.3 L681.6 279.3 L613.7 351.2 L602.4 349.1 L585.1 367.4 L511.1 353.7 L484.5 380.7 L438.2 372.2 L442.3 368.2Z" fill="#1a0008" stroke="#000" stroke-width="1.2" stroke-linejoin="round"/><path d="M276.2 335.7 L268.4 334.2 L267.8 330.0 L268.4 325.8 L270.3 321.6 L273.4 317.5 L277.7 313.7 L283.0 310.1 L289.3 306.7 L296.5 303.8 L304.4 301.2 L312.1 302.7 L405.4 217.0 L398.0 215.6 L397.3 211.7 L397.8 207.8 L399.5 204.0 L402.3 200.2 L406.2 196.7 L411.1 193.4 L416.9 190.4 L423.6 187.7 L431.1 185.4 L594.1 215.8 L597.5 212.4 L640.7 220.5 L617.7 243.9 L688.3 257.0 L670.7 275.5 L681.6 277.6 L613.7 349.4 L602.5 347.3 L585.1 365.6 L511.1 351.9 L484.4 378.9 L438.2 370.4 L442.2 366.4Z" fill="#e60064" stroke="#000" stroke-width="1.5" stroke-linejoin="round"/><path d="M260.7 327.7L579.7 386.8M265.3 323.5L583.7 382.5M269.9 319.4L587.8 378.2M274.5 315.2L591.8 373.9M279.1 311.0L595.8 369.7M283.7 306.9L599.8 365.4M288.2 302.7L603.8 361.2M292.7 298.6L607.8 357.0M297.2 294.5L611.8 352.8M301.7 290.4L615.7 348.6M306.2 286.3L619.6 344.5M310.7 282.3L623.6 340.3M315.1 278.2L627.5 336.2M319.6 274.2L631.4 332.1M324.0 270.2L635.2 328.0M328.4 266.2L639.1 323.9M332.8 262.2L643.0 319.8M337.1 258.2L646.8 315.7M341.5 254.2L650.6 311.7M345.8 250.3L654.5 307.6M350.2 246.3L658.3 303.6M354.5 242.4L662.1 299.6M358.8 238.5L665.8 295.6M363.1 234.6L669.6 291.6M367.4 230.7L673.4 287.6M371.6 226.8L677.1 283.7M375.9 223.0L680.8 279.7M380.1 219.1L684.5 275.8M384.3 215.3L688.2 271.9M388.5 211.5L691.9 268.0M392.7 207.6L695.6 264.1M396.9 203.8L699.3 260.2M401.0 200.1L702.9 256.3M405.2 196.3L706.6 252.5M409.3 192.5L710.2 248.6M413.4 188.8L713.8 244.8M417.5 185.0L717.5 241.0M421.6 181.3L721.0 237.2M251.4 336.2L571.5 395.4M253.5 336.8L425.7 179.9M262.4 338.5L434.1 181.4M271.3 340.1L442.4 183.0M280.3 341.8L450.8 184.6M289.2 343.4L459.2 186.1M298.2 345.1L467.5 187.7M307.1 346.7L475.9 189.2M316.1 348.4L484.2 190.8M325.0 350.0L492.6 192.4M333.9 351.7L500.9 193.9M342.9 353.3L509.3 195.5M351.8 355.0L517.6 197.0M360.7 356.6L526.0 198.6M369.7 358.3L534.3 200.1M378.6 359.9L542.7 201.7M387.5 361.6L551.0 203.3M396.4 363.2L559.3 204.8M405.4 364.9L567.7 206.4M414.3 366.6L576.0 207.9M423.2 368.2L584.4 209.5M432.1 369.9L592.7 211.0M441.0 371.5L601.0 212.6M450.0 373.1L609.4 214.1M458.9 374.8L617.7 215.7M467.8 376.4L626.0 217.3M476.7 378.1L634.4 218.8M485.6 379.7L642.7 220.4M494.5 381.4L651.0 221.9M503.4 383.0L659.3 223.5M512.4 384.7L667.7 225.0M521.3 386.3L676.0 226.6M530.2 388.0L684.3 228.1M539.1 389.6L692.6 229.7M548.0 391.3L701.0 231.2M556.9 392.9L709.3 232.8M565.8 394.6L717.6 234.3" clip-path="url(#c2)" stroke="#0a0004" stroke-width="1.65" fill="none"/><path d="M292.4 320.8L578.9 373.9M295.1 318.3L581.4 371.3M309.2 305.4L593.9 358.1M311.9 302.9L596.3 355.6M343.2 274.1L624.2 326.2M345.9 271.7L626.5 323.8M372.4 247.3L650.1 298.9M375.0 244.9L652.4 296.5M404.9 217.5L679.0 268.5M407.4 215.2L681.2 266.2M420.8 202.9L693.1 253.6M423.3 200.6L695.3 251.3" clip-path="url(#c2)" stroke="#0a0004" stroke-width="1.1" fill="none" opacity=".7"/><path d="M288.7 336.5L446.8 190.6M447.3 190.2L638.8 225.5M288.7 336.5L492.4 374.2M588.0 367.1L691.7 257.8M281.9 336.5L283.6 330.3L284.8 341.5L286.1 329.0L287.4 342.8L288.7 329.0L289.9 342.8L291.2 330.3L292.5 341.5L293.8 332.8L295.5 336.5M314.8 306.2L316.5 299.9L317.7 311.2L319.0 298.7L320.3 312.4L321.6 298.7L322.8 312.4L324.1 299.9L325.4 311.2L326.7 302.4L328.4 306.2M348.6 274.9L350.3 268.6L351.6 279.9L352.9 267.4L354.2 281.1L355.4 267.4L356.7 281.1L358.0 268.6L359.3 279.9L360.5 271.1L362.2 274.9M377.7 248.1L379.4 241.8L380.6 253.1L381.9 240.6L383.2 254.3L384.5 240.6L385.7 254.3L387.0 241.8L388.3 253.1L389.6 244.3L391.3 248.1M409.9 218.3L411.6 212.1L412.9 223.3L414.2 210.8L415.5 224.6L416.7 210.8L418.0 224.6L419.3 212.1L420.6 223.3L421.8 214.6L423.5 218.3M440.0 190.6L441.7 184.3L443.0 195.6L444.2 183.1L445.5 196.8L446.8 183.1L448.1 196.8L449.3 184.3L450.6 195.6L451.9 186.8L453.6 190.6M515.1 203.7L516.8 197.5L518.0 208.7L519.3 196.2L520.6 210.0L521.9 196.2L523.1 210.0L524.4 197.5L525.7 208.7L527.0 200.0L528.7 203.7M580.9 216.0L582.6 209.7L583.9 221.0L585.1 208.5L586.4 222.2L587.7 208.5L589.0 222.2L590.2 209.7L591.5 221.0L592.8 212.2L594.5 216.0M632.0 225.5L633.7 219.3L635.0 230.5L636.3 218.0L637.6 231.8L638.8 218.0L640.1 231.8L641.4 219.3L642.7 230.5L643.9 221.8L645.6 225.5M360.2 351.9L361.9 345.6L363.2 356.9L364.5 344.4L365.7 358.1L367.0 344.4L368.3 358.1L369.6 345.6L370.8 356.9L372.1 348.1L373.8 351.9M430.4 364.9L432.1 358.6L433.3 369.9L434.6 357.4L435.9 371.1L437.2 357.4L438.4 371.1L439.7 358.6L441.0 369.9L442.3 361.1L444.0 364.9M485.6 374.2L487.3 368.0L488.6 379.2L489.9 366.7L491.1 380.5L492.4 366.7L493.7 380.5L495.0 368.0L496.2 379.2L497.5 370.5L499.2 374.2M581.2 367.1L582.9 360.8L584.1 372.1L585.4 359.6L586.7 373.3L588.0 359.6L589.2 373.3L590.5 360.8L591.8 372.1L593.1 363.3L594.8 367.1M600.0 347.2L601.7 341.0L603.0 352.2L604.2 339.7L605.5 353.5L606.8 339.7L608.1 353.5L609.3 341.0L610.6 352.2L611.9 343.5L613.6 347.2M622.0 324.1L623.7 317.8L624.9 329.1L626.2 316.6L627.5 330.3L628.8 316.6L630.0 330.3L631.3 317.8L632.6 329.1L633.9 320.3L635.6 324.1M645.2 299.6L646.9 293.4L648.1 304.6L649.4 292.1L650.7 305.9L652.0 292.1L653.2 305.9L654.5 293.4L655.8 304.6L657.1 295.9L658.8 299.6M666.8 276.9L668.5 270.6L669.7 281.9L671.0 269.4L672.3 283.1L673.6 269.4L674.8 283.1L676.1 270.6L677.4 281.9L678.7 273.1L680.4 276.9M684.9 257.8L686.6 251.6L687.8 262.8L689.1 250.3L690.4 264.1L691.7 250.3L692.9 264.1L694.2 251.6L695.5 262.8L696.8 254.1L698.5 257.8" stroke="#4f62a8" stroke-width="1.2" fill="none" opacity=".9"/><g stroke="#000" stroke-width="1" stroke-linejoin="round"><path d="M618.1 182.6L638.1 162.9L637.4 223.8L617.7 243.9Z" fill="#c800c8"/><path d="M618.1 182.6L689.5 195.5L688.3 257.0L617.7 243.9Z" fill="#c800c8"/><path d="M441.1 161.9L498.9 172.4L499.6 233.5L442.4 222.8Z" fill="#e60064"/><path d="M464.9 203.5L489.4 180.7L490.2 241.9L466.0 265.1Z" fill="#c800c8"/><path d="M415.5 249.6L440.9 225.9L442.3 287.9L417.1 312.1Z" fill="#c800c8"/><path d="M346.7 247.7L367.7 251.5L369.8 313.9L349.0 310.1Z" fill="#c800c8"/><path d="M367.7 251.5L406.7 258.5L408.4 321.1L369.8 313.9Z" fill="#e60064"/><path d="M487.5 311.5L510.5 288.8L511.1 351.9L488.4 374.9Z" fill="#e60064"/><path d="M510.5 288.8L585.2 302.3L585.1 365.6L511.1 351.9Z" fill="#c800c8"/></g><path d="M273.1 274.7 L265.2 273.3 L264.6 269.1 L265.3 264.9 L267.2 260.8 L270.4 256.8 L274.7 253.0 L280.1 249.4 L286.4 246.2 L293.7 243.3 L301.7 240.8 L309.5 242.2 L403.8 157.9 L396.3 156.6 L395.6 152.7 L396.1 148.9 L397.8 145.1 L400.6 141.4 L404.6 137.9 L409.5 134.7 L415.4 131.7 L422.2 129.1 L429.7 126.8 L594.3 156.7 L597.7 153.4 L641.4 161.3 L618.1 184.3 L689.5 197.3 L671.7 215.5 L682.8 217.5 L614.2 288.2 L602.8 286.1 L585.2 304.1 L510.5 290.6 L483.5 317.3 L436.8 308.8 L440.9 304.9Z" fill="#1a0008" stroke="#000" stroke-width="1.2" stroke-linejoin="round"/><path d="M273.0 272.9 L265.1 271.5 L264.6 267.3 L265.2 263.1 L267.2 259.0 L270.3 255.0 L274.6 251.2 L280.0 247.7 L286.3 244.4 L293.6 241.5 L301.6 239.0 L309.4 240.4 L403.7 156.2 L396.2 154.8 L395.6 151.0 L396.1 147.1 L397.8 143.3 L400.6 139.7 L404.5 136.2 L409.5 132.9 L415.4 130.0 L422.2 127.3 L429.7 125.1 L594.3 155.0 L597.7 151.7 L641.4 159.6 L618.1 182.6 L689.5 195.5 L671.8 213.7 L682.8 215.7 L614.2 286.4 L602.8 284.3 L585.2 302.3 L510.5 288.8 L483.5 315.4 L436.8 307.0 L440.8 303.1Z" fill="#e60064" stroke="#000" stroke-width="1.5" stroke-linejoin="round"/><path d="M257.4 265.1L579.8 323.1M262.1 260.9L583.9 318.9M266.8 256.8L588.0 314.7M271.4 252.7L592.1 310.5M276.0 248.6L596.1 306.3M280.6 244.5L600.2 302.2M285.2 240.5L604.2 298.0M289.8 236.4L608.2 293.9M294.4 232.4L612.2 289.7M298.9 228.4L616.2 285.6M303.4 224.3L620.2 281.5M308.0 220.4L624.1 277.4M312.5 216.4L628.1 273.4M316.9 212.4L632.0 269.3M321.4 208.4L635.9 265.3M325.9 204.5L639.9 261.3M330.3 200.6L643.7 257.2M334.7 196.7L647.6 253.2M339.1 192.8L651.5 249.3M343.5 188.9L655.4 245.3M347.9 185.0L659.2 241.3M352.3 181.1L663.0 237.4M356.6 177.3L666.8 233.4M361.0 173.5L670.6 229.5M365.3 169.6L674.4 225.6M369.6 165.8L678.2 221.7M373.9 162.0L682.0 217.8M378.2 158.2L685.7 214.0M382.4 154.5L689.5 210.1M386.7 150.7L693.2 206.3M390.9 147.0L696.9 202.4M395.1 143.2L700.6 198.6M399.3 139.5L704.3 194.8M403.5 135.8L708.0 191.0M407.7 132.1L711.7 187.2M411.9 128.4L715.3 183.5M416.0 124.7L719.0 179.7M420.2 121.1L722.6 176.0M248.0 273.4L571.5 331.6M250.1 274.0L424.3 119.7M259.1 275.6L432.7 121.2M268.1 277.2L441.2 122.7M277.2 278.9L449.6 124.3M286.2 280.5L458.0 125.8M295.3 282.1L466.5 127.3M304.3 283.8L474.9 128.9M313.3 285.4L483.4 130.4M322.4 287.0L491.8 131.9M331.4 288.6L500.2 133.5M340.4 290.3L508.7 135.0M349.4 291.9L517.1 136.5M358.5 293.5L525.5 138.1M367.5 295.1L534.0 139.6M376.5 296.8L542.4 141.1M385.5 298.4L550.8 142.6M394.6 300.0L559.2 144.2M403.6 301.6L567.7 145.7M412.6 303.3L576.1 147.2M421.6 304.9L584.5 148.8M430.6 306.5L592.9 150.3M439.7 308.1L601.3 151.8M448.7 309.8L609.8 153.4M457.7 311.4L618.2 154.9M466.7 313.0L626.6 156.4M475.7 314.6L635.0 157.9M484.7 316.2L643.4 159.5M493.7 317.9L651.8 161.0M502.7 319.5L660.3 162.5M511.7 321.1L668.7 164.0M520.7 322.7L677.1 165.6M529.7 324.4L685.5 167.1M538.7 326.0L693.9 168.6M547.7 327.6L702.3 170.1M556.7 329.2L710.7 171.7M565.7 330.8L719.1 173.2" clip-path="url(#c1)" stroke="#0a0004" stroke-width="1.65" fill="none"/><path d="M289.4 258.2L579.0 310.5M292.2 255.8L581.5 307.9M306.4 243.0L594.1 294.9M309.2 240.6L596.6 292.4M340.9 212.3L624.7 263.6M343.6 209.9L627.1 261.2M370.4 185.9L651.0 236.7M373.0 183.6L653.3 234.3M403.2 156.7L680.1 206.8M405.7 154.4L682.4 204.5M419.3 142.3L694.4 192.2M421.8 140.0L696.6 189.9" clip-path="url(#c1)" stroke="#0a0004" stroke-width="1.1" fill="none" opacity=".7"/><path d="M285.7 273.7L445.5 130.2M446.0 129.8L639.5 164.5M285.7 273.7L491.6 310.8M588.2 303.8L692.9 196.3M278.9 273.7L280.6 267.4L281.8 278.7L283.1 266.2L284.4 279.9L285.7 266.2L286.9 279.9L288.2 267.4L289.5 278.7L290.8 269.9L292.5 273.7M312.1 243.8L313.8 237.6L315.1 248.8L316.4 236.3L317.7 250.1L318.9 236.3L320.2 250.1L321.5 237.6L322.8 248.8L324.0 240.1L325.7 243.8M346.4 213.1L348.1 206.8L349.4 218.1L350.6 205.6L351.9 219.3L353.2 205.6L354.5 219.3L355.7 206.8L357.0 218.1L358.3 209.3L360.0 213.1M375.8 186.7L377.5 180.5L378.7 191.7L380.0 179.2L381.3 193.0L382.6 179.2L383.8 193.0L385.1 180.5L386.4 191.7L387.7 183.0L389.4 186.7M408.4 157.5L410.1 151.2L411.4 162.5L412.6 150.0L413.9 163.7L415.2 150.0L416.5 163.7L417.7 151.2L419.0 162.5L420.3 153.7L422.0 157.5M438.7 130.2L440.4 124.0L441.7 135.2L443.0 122.7L444.3 136.5L445.5 122.7L446.8 136.5L448.1 124.0L449.4 135.2L450.6 126.5L452.3 130.2M514.6 143.1L516.3 136.8L517.5 148.1L518.8 135.6L520.1 149.3L521.4 135.6L522.6 149.3L523.9 136.8L525.2 148.1L526.5 139.3L528.2 143.1M581.1 155.2L582.8 148.9L584.0 160.2L585.3 147.7L586.6 161.4L587.9 147.7L589.1 161.4L590.4 148.9L591.7 160.2L593.0 151.4L594.7 155.2M632.7 164.5L634.4 158.3L635.7 169.5L637.0 157.0L638.3 170.8L639.5 157.0L640.8 170.8L642.1 158.3L643.4 169.5L644.6 160.8L646.3 164.5M358.0 288.8L359.7 282.6L361.0 293.8L362.3 281.3L363.6 295.1L364.8 281.3L366.1 295.1L367.4 282.6L368.7 293.8L369.9 285.1L371.6 288.8M428.9 301.6L430.6 295.4L431.9 306.6L433.2 294.1L434.5 307.9L435.7 294.1L437.0 307.9L438.3 295.4L439.6 306.6L440.8 297.9L442.5 301.6M484.8 310.8L486.5 304.5L487.7 315.8L489.0 303.3L490.3 317.0L491.6 303.3L492.8 317.0L494.1 304.5L495.4 315.8L496.7 307.0L498.4 310.8M581.4 303.8L583.1 297.5L584.3 308.8L585.6 296.3L586.9 310.0L588.2 296.3L589.4 310.0L590.7 297.5L592.0 308.8L593.3 300.0L595.0 303.8M600.4 284.2L602.1 278.0L603.4 289.2L604.6 276.7L605.9 290.5L607.2 276.7L608.5 290.5L609.7 278.0L611.0 289.2L612.3 280.5L614.0 284.2M622.6 261.5L624.3 255.2L625.6 266.5L626.8 254.0L628.1 267.7L629.4 254.0L630.7 267.7L631.9 255.2L633.2 266.5L634.5 257.7L636.2 261.5M646.0 237.4L647.7 231.2L649.0 242.4L650.3 229.9L651.5 243.7L652.8 229.9L654.1 243.7L655.4 231.2L656.6 242.4L657.9 233.7L659.6 237.4M667.8 215.0L669.5 208.8L670.8 220.0L672.1 207.5L673.4 221.3L674.6 207.5L675.9 221.3L677.2 208.8L678.5 220.0L679.7 211.3L681.4 215.0M686.1 196.3L687.8 190.0L689.1 201.3L690.4 188.8L691.6 202.5L692.9 188.8L694.2 202.5L695.5 190.0L696.7 201.3L698.0 192.5L699.7 196.3" stroke="#4f62a8" stroke-width="1.2" fill="none" opacity=".9"/><path d="M282.6 209.5L308.9 759.5M316.3 180.2L339.2 726.3M362.6 224.4L381.7 776.3M434.3 237.0L446.8 790.5M490.7 246.0L498.1 800.7M588.4 239.1L586.7 792.9M607.6 219.9L604.1 771.2M630.0 197.5L624.6 745.9M653.7 173.9L646.1 719.1M675.7 151.9L666.3 694.2M694.2 133.5L683.2 673.3" stroke="#4f62a8" stroke-width="1.3" fill="none" opacity=".85"/><g stroke="#000" stroke-width="1" stroke-linejoin="round"><path d="M493.3 728.6L514.6 703.8L515.4 776.3L494.4 801.5Z" fill="#c800c8"/><path d="M514.6 703.8L584.2 718.5L584.0 791.3L515.4 776.3Z" fill="#c800c8"/><path d="M492.6 672.7L514.1 648.1L514.6 703.8L493.3 728.6Z" fill="#c800c8"/><path d="M514.1 648.1L584.3 662.7L584.2 718.5L514.6 703.8Z" fill="#c800c8"/><path d="M491.8 615.6L513.5 591.3L514.1 648.1L492.6 672.7Z" fill="#c800c8"/><path d="M513.5 591.3L584.5 605.7L584.3 662.7L514.1 648.1Z" fill="#c800c8"/><path d="M490.9 557.3L512.9 533.3L513.5 591.3L491.8 615.6Z" fill="#c800c8"/><path d="M512.9 533.3L584.6 547.6L584.5 605.7L513.5 591.3Z" fill="#c800c8"/><path d="M490.1 497.8L512.3 474.1L512.9 533.3L490.9 557.3Z" fill="#c800c8"/><path d="M512.3 474.1L584.8 488.2L584.6 547.6L512.9 533.3Z" fill="#c800c8"/><path d="M489.3 437.0L511.7 413.6L512.3 474.1L490.1 497.8Z" fill="#e60064"/><path d="M511.7 413.6L584.9 427.5L584.8 488.2L512.3 474.1Z" fill="#c800c8"/><path d="M488.4 374.9L511.1 351.9L511.7 413.6L489.3 437.0Z" fill="#e60064"/><path d="M511.1 351.9L585.1 365.6L584.9 427.5L511.7 413.6Z" fill="#c800c8"/><path d="M487.5 311.5L510.5 288.8L511.1 351.9L488.4 374.9Z" fill="#e60064"/><path d="M510.5 288.8L585.2 302.3L585.1 365.6L511.1 351.9Z" fill="#c800c8"/></g><g stroke="#000" stroke-width="1" stroke-linejoin="round"><path d="M618.6 120.0L638.8 100.7L638.1 162.9L618.1 182.6Z" fill="#e60064"/><path d="M618.6 120.0L690.8 132.7L689.5 195.5L618.1 182.6Z" fill="#e60064"/><path d="M439.8 99.7L498.1 110.0L498.9 172.4L441.1 161.9Z" fill="#e60064"/><path d="M463.8 140.5L488.5 118.1L489.4 180.7L464.9 203.5Z" fill="#e60064"/><path d="M413.9 185.9L439.6 162.6L440.9 225.9L415.5 249.6Z" fill="#e60064"/><path d="M344.3 184.0L350.4 185.0L352.7 248.8L346.7 247.7Z" fill="#c800c8"/><path d="M350.4 185.0L404.9 194.6L406.7 258.5L352.7 248.8Z" fill="#e60064"/><path d="M486.6 246.7L509.8 224.4L510.5 288.8L487.5 311.5Z" fill="#e60064"/><path d="M509.8 224.4L585.4 237.7L585.2 302.3L510.5 288.8Z" fill="#e60064"/></g><path d="M269.9 210.6 L261.9 209.2 L261.4 205.1 L262.0 201.0 L264.0 196.9 L267.2 193.0 L271.5 189.3 L277.0 185.8 L283.4 182.6 L290.7 179.7 L298.8 177.2 L306.7 178.6 L402.1 95.9 L394.5 94.5 L393.8 90.7 L394.3 87.0 L396.0 83.3 L398.9 79.7 L402.9 76.2 L407.9 73.0 L413.9 70.1 L420.7 67.5 L428.3 65.3 L594.6 94.7 L598.0 91.4 L642.1 99.2 L618.6 121.8 L690.7 134.5 L672.8 152.4 L683.9 154.4 L614.6 223.8 L603.2 221.8 L585.4 239.5 L509.9 226.2 L482.6 252.4 L435.4 244.1 L439.5 240.3Z" fill="#1a0008" stroke="#000" stroke-width="1.2" stroke-linejoin="round"/><path d="M269.8 208.7 L261.9 207.3 L261.3 203.2 L262.0 199.1 L263.9 195.1 L267.1 191.2 L271.4 187.4 L276.9 183.9 L283.3 180.7 L290.7 177.9 L298.8 175.4 L306.6 176.8 L402.0 94.1 L394.5 92.8 L393.8 89.0 L394.3 85.2 L396.0 81.5 L398.9 77.9 L402.8 74.5 L407.9 71.3 L413.8 68.4 L420.7 65.8 L428.3 63.6 L594.6 92.9 L598.0 89.7 L642.1 97.5 L618.6 120.0 L690.8 132.7 L672.8 150.6 L684.0 152.5 L614.6 222.0 L603.2 220.0 L585.4 237.7 L509.8 224.4 L482.6 250.6 L435.3 242.3 L439.4 238.4Z" fill="#e60064" stroke="#000" stroke-width="1.5" stroke-linejoin="round"/><path d="M254.1 201.0L579.9 258.1M258.8 197.0L584.0 254.0M263.5 192.9L588.2 249.8M268.2 188.9L592.3 245.7M272.9 184.9L596.4 241.6M277.6 180.9L600.5 237.5M282.2 176.9L604.6 233.4M286.8 172.9L608.6 229.3M291.4 168.9L612.7 225.3M296.0 165.0L616.7 221.3M300.6 161.0L620.7 217.2M305.2 157.1L624.7 213.2M309.8 153.2L628.7 209.2M314.3 149.3L632.7 205.2M318.8 145.4L636.7 201.3M323.3 141.5L640.6 197.3M327.8 137.7L644.5 193.4M332.3 133.8L648.5 189.4M336.7 130.0L652.4 185.5M341.2 126.2L656.3 181.6M345.6 122.4L660.1 177.7M350.0 118.6L664.0 173.8M354.4 114.8L667.9 170.0M358.8 111.1L671.7 166.1M363.2 107.3L675.5 162.3M367.5 103.6L679.4 158.4M371.9 99.8L683.2 154.6M376.2 96.1L687.0 150.8M380.5 92.4L690.7 147.0M384.8 88.7L694.5 143.3M389.1 85.0L698.3 139.5M393.3 81.4L702.0 135.8M397.6 77.7L705.7 132.0M401.8 74.1L709.4 128.3M406.1 70.5L713.1 124.6M410.3 66.8L716.8 120.9M414.5 63.2L720.5 117.2M418.6 59.6L724.2 113.5M244.5 209.2L571.6 266.5M246.6 209.8L422.8 58.3M255.7 211.4L431.3 59.8M264.9 213.0L439.9 61.3M274.0 214.6L448.4 62.8M283.1 216.2L456.9 64.3M292.3 217.8L465.4 65.8M301.4 219.4L474.0 67.3M310.5 221.0L482.5 68.8M319.7 222.6L491.0 70.3M328.8 224.2L499.5 71.8M337.9 225.8L508.0 73.3M347.0 227.4L516.6 74.8M356.2 229.0L525.1 76.3M365.3 230.6L533.6 77.8M374.4 232.2L542.1 79.3M383.5 233.8L550.6 80.8M392.6 235.4L559.1 82.3M401.8 237.0L567.6 83.8M410.9 238.6L576.1 85.3M420.0 240.2L584.7 86.8M429.1 241.8L593.2 88.3M438.2 243.4L601.7 89.8M447.3 245.0L610.2 91.3M456.4 246.6L618.7 92.8M465.6 248.2L627.2 94.3M474.7 249.7L635.7 95.8M483.8 251.3L644.2 97.3M492.9 252.9L652.7 98.8M502.0 254.5L661.2 100.3M511.1 256.1L669.7 101.8M520.2 257.7L678.2 103.3M529.3 259.3L686.7 104.8M538.4 260.9L695.2 106.3M547.5 262.5L703.7 107.8M556.6 264.1L712.2 109.3M565.7 265.7L720.7 110.8" clip-path="url(#c0)" stroke="#0a0004" stroke-width="1.65" fill="none"/><path d="M286.4 194.3L579.1 245.7M289.2 191.9L581.6 243.2M303.6 179.4L594.4 230.4M306.4 177.0L596.9 228.0M338.5 149.2L625.3 199.6M341.2 146.9L627.7 197.2M368.3 123.3L651.8 173.2M371.0 121.0L654.2 170.8M401.5 94.6L681.3 143.8M404.1 92.3L683.6 141.6M417.7 80.5L695.7 129.4M420.3 78.3L698.0 127.2" clip-path="url(#c0)" stroke="#0a0004" stroke-width="1.1" fill="none" opacity=".7"/><path d="M282.6 209.5L444.3 68.6M444.8 68.2L640.3 102.3M282.6 209.5L490.7 246.0M588.4 239.1L694.2 133.5M275.8 209.5L277.5 203.3L278.8 214.5L280.0 202.0L281.3 215.8L282.6 202.0L283.9 215.8L285.1 203.3L286.4 214.5L287.7 205.8L289.4 209.5M309.5 180.2L311.2 173.9L312.4 185.2L313.7 172.7L315.0 186.4L316.3 172.7L317.5 186.4L318.8 173.9L320.1 185.2L321.4 176.4L323.1 180.2M344.1 150.0L345.8 143.7L347.1 155.0L348.4 142.5L349.6 156.2L350.9 142.5L352.2 156.2L353.5 143.7L354.7 155.0L356.0 146.2L357.7 150.0M373.8 124.1L375.5 117.8L376.8 129.1L378.1 116.6L379.3 130.3L380.6 116.6L381.9 130.3L383.2 117.8L384.4 129.1L385.7 120.3L387.4 124.1M406.8 95.3L408.5 89.1L409.8 100.3L411.0 87.8L412.3 101.6L413.6 87.8L414.9 101.6L416.1 89.1L417.4 100.3L418.7 91.6L420.4 95.3M437.5 68.6L439.2 62.3L440.5 73.6L441.7 61.1L443.0 74.8L444.3 61.1L445.6 74.8L446.8 62.3L448.1 73.6L449.4 64.8L451.1 68.6M514.1 81.2L515.8 75.0L517.1 86.2L518.3 73.7L519.6 87.5L520.9 73.7L522.2 87.5L523.4 75.0L524.7 86.2L526.0 77.5L527.7 81.2M581.3 93.1L583.0 86.8L584.2 98.1L585.5 85.6L586.8 99.3L588.1 85.6L589.3 99.3L590.6 86.8L591.9 98.1L593.2 89.3L594.9 93.1M633.5 102.3L635.2 96.0L636.4 107.3L637.7 94.8L639.0 108.5L640.3 94.8L641.5 108.5L642.8 96.0L644.1 107.3L645.4 98.5L647.1 102.3M355.8 224.4L357.5 218.1L358.8 229.4L360.1 216.9L361.3 230.6L362.6 216.9L363.9 230.6L365.2 218.1L366.4 229.4L367.7 220.6L369.4 224.4M427.5 237.0L429.2 230.7L430.4 242.0L431.7 229.5L433.0 243.2L434.3 229.5L435.5 243.2L436.8 230.7L438.1 242.0L439.4 233.2L441.1 237.0M483.9 246.0L485.6 239.7L486.9 251.0L488.1 238.5L489.4 252.2L490.7 238.5L492.0 252.2L493.2 239.7L494.5 251.0L495.8 242.2L497.5 246.0M581.6 239.1L583.3 232.8L584.5 244.1L585.8 231.6L587.1 245.3L588.4 231.6L589.6 245.3L590.9 232.8L592.2 244.1L593.5 235.3L595.2 239.1M600.8 219.9L602.5 213.6L603.8 224.9L605.0 212.4L606.3 226.1L607.6 212.4L608.9 226.1L610.1 213.6L611.4 224.9L612.7 216.1L614.4 219.9M623.2 197.5L624.9 191.2L626.2 202.5L627.5 190.0L628.8 203.7L630.0 190.0L631.3 203.7L632.6 191.2L633.9 202.5L635.1 193.7L636.8 197.5M646.9 173.9L648.6 167.6L649.9 178.9L651.2 166.4L652.4 180.1L653.7 166.4L655.0 180.1L656.3 167.6L657.5 178.9L658.8 170.1L660.5 173.9M668.9 151.9L670.6 145.6L671.9 156.9L673.2 144.4L674.5 158.1L675.7 144.4L677.0 158.1L678.3 145.6L679.6 156.9L680.8 148.1L682.5 151.9M687.4 133.5L689.1 127.2L690.4 138.5L691.6 126.0L692.9 139.7L694.2 126.0L695.5 139.7L696.7 127.2L698.0 138.5L699.3 129.7L701.0 133.5" stroke="#4f62a8" stroke-width="1.2" fill="none" opacity=".9"/></svg></div>
<div id="rview" class="abs"><svg class="abs" style="left:0;top:0" width="941" height="844" viewBox="0 0 941 844"><path d="M-2.0 0V844M23.0 0V844M48.0 0V844M73.0 0V844M98.0 0V844M123.0 0V844M148.0 0V844M173.0 0V844M198.0 0V844M248.0 0V844M273.0 0V844M298.0 0V844M323.0 0V844M348.0 0V844M373.0 0V844M398.0 0V844M423.0 0V844M448.0 0V844M498.0 0V844M523.0 0V844M548.0 0V844M573.0 0V844M598.0 0V844M623.0 0V844M648.0 0V844M673.0 0V844M698.0 0V844M748.0 0V844M773.0 0V844M798.0 0V844M823.0 0V844M848.0 0V844M873.0 0V844M898.0 0V844M923.0 0V844M948.0 0V844M0 12.8H941M0 37.8H941M0 62.8H941M0 87.8H941M0 112.8H941M0 162.8H941M0 187.8H941M0 212.8H941M0 237.8H941M0 262.8H941M0 287.8H941M0 312.8H941M0 337.8H941M0 362.8H941M0 412.8H941M0 437.8H941M0 462.8H941M0 487.8H941M0 512.8H941M0 537.8H941M0 562.8H941M0 587.8H941M0 612.8H941M0 637.8H941M0 662.8H941M0 687.8H941M0 712.8H941M0 737.8H941M0 762.8H941M0 787.8H941M0 812.8H941M0 837.8H941" stroke="#b0d3f9" stroke-width="1.150" fill="none"/><path d="M223.0 0V844M473.0 0V844M723.0 0V844M0 137.8H941M0 387.8H941" stroke="#8cc0f6" stroke-width="1.550" fill="none"/><defs><clipPath id="pc"><path d="M165.0 308.0 L165.0 301.0 L172.0 297.1 L179.4 294.1 L187.1 292.1 L195.0 291.1 L203.0 291.1 L210.9 292.1 L218.6 294.1 L226.0 297.1 L233.0 301.0 L233.0 308.0 L418.5 308.0 L418.5 301.0 L425.6 297.1 L433.1 294.1 L440.9 292.1 L448.9 291.1 L457.0 291.1 L465.0 292.1 L472.8 294.1 L480.3 297.1 L487.4 301.0 L487.4 457.0 L495.0 457.0 L495.0 498.5 L442.3 498.5 L442.3 565.7 L401.5 565.7 L401.5 576.0 L249.0 576.0 L249.0 565.7 L211.6 565.7 L211.6 498.5 L157.0 498.5 L157.0 457.0 L165.0 457.0Z"/></clipPath></defs><path d="M165.0 308.0 L165.0 301.0 L172.0 297.1 L179.4 294.1 L187.1 292.1 L195.0 291.1 L203.0 291.1 L210.9 292.1 L218.6 294.1 L226.0 297.1 L233.0 301.0 L233.0 308.0 L418.5 308.0 L418.5 301.0 L425.6 297.1 L433.1 294.1 L440.9 292.1 L448.9 291.1 L457.0 291.1 L465.0 292.1 L472.8 294.1 L480.3 297.1 L487.4 301.0 L487.4 457.0 L495.0 457.0 L495.0 498.5 L442.3 498.5 L442.3 565.7 L401.5 565.7 L401.5 576.0 L249.0 576.0 L249.0 565.7 L211.6 565.7 L211.6 498.5 L157.0 498.5 L157.0 457.0 L165.0 457.0Z" fill="#c800c8" stroke="#000" stroke-width="1.600"/><path d="M172.4 289.0V577.0M179.8 289.0V577.0M187.2 289.0V577.0M194.6 289.0V577.0M202.0 289.0V577.0M209.4 289.0V577.0M216.8 289.0V577.0M224.2 289.0V577.0M231.6 289.0V577.0M239.0 289.0V577.0M246.4 289.0V577.0M253.8 289.0V577.0M261.2 289.0V577.0M268.6 289.0V577.0M276.0 289.0V577.0M283.4 289.0V577.0M290.8 289.0V577.0M298.2 289.0V577.0M305.6 289.0V577.0M313.0 289.0V577.0M320.4 289.0V577.0M327.8 289.0V577.0M335.2 289.0V577.0M342.6 289.0V577.0M350.0 289.0V577.0M357.4 289.0V577.0M364.8 289.0V577.0M372.2 289.0V577.0M379.6 289.0V577.0M387.0 289.0V577.0M394.4 289.0V577.0M401.8 289.0V577.0M409.2 289.0V577.0M416.6 289.0V577.0M424.0 289.0V577.0M431.4 289.0V577.0M438.8 289.0V577.0M446.2 289.0V577.0M453.6 289.0V577.0M461.0 289.0V577.0M468.4 289.0V577.0M475.8 289.0V577.0M483.2 289.0V577.0M490.6 289.0V577.0M157.6 289.0V577.0M156.0 294.4H496.0M156.0 301.2H496.0M156.0 308.0H496.0M156.0 314.8H496.0M156.0 321.6H496.0M156.0 328.4H496.0M156.0 335.2H496.0M156.0 342.0H496.0M156.0 348.8H496.0M156.0 355.6H496.0M156.0 362.4H496.0M156.0 369.2H496.0M156.0 376.0H496.0M156.0 382.8H496.0M156.0 389.6H496.0M156.0 396.4H496.0M156.0 403.2H496.0M156.0 410.0H496.0M156.0 416.8H496.0M156.0 423.6H496.0M156.0 430.4H496.0M156.0 437.2H496.0M156.0 444.0H496.0M156.0 450.8H496.0M156.0 457.6H496.0M156.0 464.4H496.0M156.0 471.2H496.0M156.0 478.0H496.0M156.0 484.8H496.0M156.0 491.6H496.0M156.0 498.4H496.0M156.0 505.2H496.0M156.0 512.0H496.0M156.0 518.8H496.0M156.0 525.6H496.0M156.0 532.4H496.0M156.0 539.2H496.0M156.0 546.0H496.0M156.0 552.8H496.0M156.0 559.6H496.0M156.0 566.4H496.0M156.0 573.2H496.0" clip-path="url(#pc)" stroke="#000" stroke-width="1.350" fill="none"/><path d="M233.0 302.0L233.0 421.0M301.0 376.0L301.0 421.0M218.0 396.4L251.0 396.4M418.5 302.0L418.5 421.0M351.0 376.0L351.0 421.0M401.0 396.4L434.0 396.4M296.0 308.0L296.0 339.0M354.0 308.0L354.0 339.0M254.0 467.0L254.0 517.0M398.0 467.0L398.0 517.0M296.0 437.0L296.0 576.0M354.0 437.0L354.0 576.0" stroke="#000" stroke-width="2" fill="none" opacity=".9"/><rect x="211.6" y="565.7" width="37" height="10" fill="#fff" stroke="#111" stroke-width="1"/><rect x="402.0" y="565.7" width="40" height="10" fill="#fff" stroke="#111" stroke-width="1"/><path d="M167.8 316.5L485.0 316.5M167.8 316.5L167.8 501.0M485.0 316.5L485.0 501.0M210.0 570.5L442.0 570.5" stroke="#5a64a6" stroke-width="1.800" fill="none" opacity=".85"/><g fill="#5a64a6" opacity=".9"><rect x="165.2" y="313.0" width="4.5" height="10"/><rect x="227.8" y="313.0" width="4.5" height="10"/><rect x="293.8" y="313.0" width="4.5" height="10"/><rect x="351.8" y="313.0" width="4.5" height="10"/><rect x="417.8" y="313.0" width="4.5" height="10"/><rect x="480.8" y="313.0" width="4.5" height="10"/><rect x="163.8" y="384.0" width="4.5" height="10"/><rect x="321.0" y="383.5" width="8" height="11"/><rect x="482.5" y="384.0" width="4.5" height="10"/><rect x="163.8" y="447.0" width="4.5" height="10"/><rect x="227.8" y="447.0" width="4.5" height="10"/><rect x="321.0" y="446.5" width="8" height="11"/><rect x="417.8" y="447.0" width="4.5" height="10"/><rect x="482.5" y="447.0" width="4.5" height="10"/><rect x="251.8" y="486.0" width="4.5" height="10"/><rect x="395.8" y="486.0" width="4.5" height="10"/><rect x="165.2" y="496.0" width="4.5" height="10"/><rect x="482.5" y="496.0" width="4.5" height="10"/><rect x="321.0" y="529.5" width="8" height="11"/><rect x="207.8" y="564.0" width="4.5" height="10"/><rect x="248.3" y="564.0" width="4.5" height="10"/><rect x="296.5" y="564.0" width="4.5" height="10"/><rect x="348.5" y="564.0" width="4.5" height="10"/><rect x="397.8" y="564.0" width="4.5" height="10"/><rect x="439.8" y="564.0" width="4.5" height="10"/></g><circle cx="328.0" cy="453.0" r="5" fill="#e60064" opacity=".55"/><circle cx="328.0" cy="536.0" r="5" fill="#e60064" opacity=".55"/><circle cx="257.0" cy="492.0" r="5" fill="#e60064" opacity=".55"/><circle cx="401.0" cy="492.0" r="5" fill="#e60064" opacity=".55"/><circle cx="233.0" cy="453.0" r="5" fill="#e60064" opacity=".55"/><circle cx="423.0" cy="453.0" r="5" fill="#e60064" opacity=".55"/><ellipse cx="450.0" cy="494.0" rx="9" ry="4" fill="#e60064" opacity=".8"/><g fill="none" stroke="#ff1020" stroke-width="1.400"><rect x="229.0" y="341.0" width="7" height="56"/><rect x="251.5" y="392.0" width="51" height="7.5"/><rect x="418.0" y="341.0" width="6" height="56"/><rect x="350.7" y="392.0" width="51" height="7.5"/></g><path d="M165.0 497.5H211.6V565.7M165.0 501.0H208.5V565.7" fill="none" stroke="#ff1020" stroke-width="1.300"/><path d="M487.4 497.5H442.3V565.7M487.4 501.0H445.5V565.7" fill="none" stroke="#ff1020" stroke-width="1.300"/><path d="M166.0 498.5H210.5V500.5H166.0Z" fill="#fff"/><path d="M443.5 498.5H487.0V500.5H443.5Z" fill="#fff"/></svg></div>
<div class="abs leg" style="left:32.5px;top:966px;width:941.5px;height:32px;background:linear-gradient(90deg,#c800c8 0.00px,#c800c8 62.77px,#e60064 62.77px,#e60064 125.53px,#ff0000 125.53px,#ff0000 188.30px,#ff4600 188.30px,#ff4600 251.07px,#ff8200 251.07px,#ff8200 313.83px,#ffaa00 313.83px,#ffaa00 376.60px,#ffd200 376.60px,#ffd200 439.37px,#ffff00 439.37px,#ffff00 502.13px,#78ff00 502.13px,#78ff00 564.90px,#00f000 564.90px,#00f000 627.67px,#00ff78 627.67px,#00ff78 690.43px,#00ffff 690.43px,#00ffff 753.20px,#00aaff 753.20px,#00aaff 815.97px,#0050ff 815.97px,#0050ff 878.73px,#0000ff 878.73px,#0000ff 941.50px)"><span class="lg" style="left:32.8px">0</span><span class="lg" style="left:95.5px">8</span><span class="lg" style="left:158.3px">16</span><span class="lg" style="left:221.1px">24</span><span class="lg" style="left:283.8px">32</span><span class="lg" style="left:346.6px">40</span><span class="lg" style="left:409.4px">48</span><span class="lg" style="left:472.1px">56</span><span class="lg" style="left:534.9px">64</span><span class="lg" style="left:597.7px">72</span><span class="lg" style="left:660.4px">80</span><span class="lg" style="left:723.2px">88</span><span class="lg" style="left:786.0px">96</span><span class="lg" style="left:848.7px">104</span><span class="lg" style="left:auto;right:4.500px;width:auto">E+3</span></div>
<div class="abs leg" style="left:979.5px;top:966px;width:940.5px;height:32px;background:linear-gradient(90deg,#c800c8 0.00px,#c800c8 62.70px,#e60064 62.70px,#e60064 125.40px,#ff0000 125.40px,#ff0000 188.10px,#ff4600 188.10px,#ff4600 250.80px,#ff8200 250.80px,#ff8200 313.50px,#ffaa00 313.50px,#ffaa00 376.20px,#ffd200 376.20px,#ffd200 438.90px,#ffff00 438.90px,#ffff00 501.60px,#78ff00 501.60px,#78ff00 564.30px,#00f000 564.30px,#00f000 627.00px,#00ff78 627.00px,#00ff78 689.70px,#00ffff 689.70px,#00ffff 752.40px,#00aaff 752.40px,#00aaff 815.10px,#0050ff 815.10px,#0050ff 877.80px,#0000ff 877.80px,#0000ff 940.50px)"><span class="lg" style="left:32.7px">1.4</span><span class="lg" style="left:95.4px">2.8</span><span class="lg" style="left:158.1px">4.2</span><span class="lg" style="left:220.8px">5.6</span><span class="lg" style="left:283.5px">7.0</span><span class="lg" style="left:346.2px">8.4</span><span class="lg" style="left:408.9px">9.8</span><span class="lg" style="left:471.6px">11.2</span><span class="lg" style="left:534.3px">12.6</span><span class="lg" style="left:597.0px">14.0</span><span class="lg" style="left:659.7px">15.4</span><span class="lg" style="left:722.4px">16.8</span><span class="lg" style="left:785.1px">18.2</span><span class="lg" style="left:847.8px">19.6</span><span class="lg" style="left:auto;right:4.500px;width:auto">E+3</span></div>
<div id="status" class="abs"></div><div id="bottom" class="abs"></div>
<div class="btn" style="left:1772px;width:36px">&lt;&lt;</div><div class="btn" style="left:1812px;width:36px">&gt;&gt;</div><div class="btn" style="left:1852px;width:64px">Units...</div>
<span class="t" style="left:27.5px;top:6.4px;font-size:14.3px;letter-spacing:0.016px;color:#000;">ETABS 2016 Ultimate 16.2.1 - G2&nbsp; etabs</span>
<span class="t" style="left:11.7px;top:35.7px;font-size:14px;letter-spacing:-0.321px;color:#1a1a1a;">File</span>
<span class="t" style="left:57.7px;top:35.7px;font-size:14px;letter-spacing:-0.042px;color:#1a1a1a;">Edit</span>
<span class="t" style="left:106.7px;top:35.7px;font-size:14px;letter-spacing:-0.031px;color:#1a1a1a;">View</span>
<span class="t" style="left:161.7px;top:35.7px;font-size:14px;letter-spacing:0.226px;color:#1a1a1a;">Define</span>
<span class="t" style="left:227.7px;top:35.7px;font-size:14px;letter-spacing:0.209px;color:#1a1a1a;">Draw</span>
<span class="t" style="left:285.0px;top:35.7px;font-size:14px;letter-spacing:-0.124px;color:#1a1a1a;">Select</span>
<span class="t" style="left:347.7px;top:35.7px;font-size:14px;letter-spacing:0.194px;color:#1a1a1a;">Assign</span>
<span class="t" style="left:415.0px;top:35.7px;font-size:14px;letter-spacing:0.198px;color:#1a1a1a;">Analyze</span>
<span class="t" style="left:490.0px;top:35.7px;font-size:14px;letter-spacing:0.232px;color:#1a1a1a;">Display</span>
<span class="t" style="left:561.7px;top:35.7px;font-size:14px;letter-spacing:0.081px;color:#1a1a1a;">Design</span>
<span class="t" style="left:630.0px;top:35.7px;font-size:14px;letter-spacing:0.477px;color:#1a1a1a;">Detailing</span>
<span class="t" style="left:712.7px;top:35.7px;font-size:14px;letter-spacing:0.675px;color:#1a1a1a;">Options</span>
<span class="t" style="left:789.0px;top:35.7px;font-size:14px;letter-spacing:0.153px;color:#1a1a1a;">Tools</span>
<span class="t" style="left:846.7px;top:35.7px;font-size:14px;letter-spacing:0.601px;color:#1a1a1a;">Help</span>
<span class="t" style="left:84.0px;top:102.3px;font-size:14px;letter-spacing:0.308px;color:#000;">3-D View</span>
<span class="t" style="left:157.7px;top:102.3px;font-size:14px;letter-spacing:0.014px;color:#000;">Stress SMAX Diagram</span>
<span class="t" style="left:307.0px;top:102.3px;font-size:14px;letter-spacing:0.205px;color:#000;">Abs Max</span>
<span class="t" style="left:379.0px;top:102.3px;font-size:14px;letter-spacing:0.391px;color:#000;">(Ult)</span>
<span class="t" style="left:1030.2px;top:102.3px;font-size:14px;letter-spacing:0.286px;color:#000;">Plan View - Story1 - Z = 4 (m)</span>
<span class="t" style="left:1239.0px;top:102.3px;font-size:14px;letter-spacing:-0.024px;color:#000;">Stress SVM Diagram</span>
<span class="t" style="left:1377.7px;top:102.3px;font-size:14px;letter-spacing:0.189px;color:#000;">Abs Max</span>
<span class="t" style="left:1450.7px;top:102.3px;font-size:14px;letter-spacing:-0.039px;color:#000;">(Dead)</span>
<span class="t" style="left:12.0px;top:1004.8px;font-size:13px;letter-spacing:0.186px;color:#111;">Max = 20895.94 at [93.0621, 46.7365, 4];&nbsp; Min = 7.62 at [108.2621, 52.3765, 4]</span>
<span class="t" style="left:415.700px;top:102.300px;font-size:14px;letter-spacing:1.1px">[kN/m<span class="sup">2</span>]</span>
<span class="t" style="left:1501.700px;top:102.300px;font-size:14px;letter-spacing:1.1px">[kN/m<span class="sup">2</span>]</span>
<div id="wm" class="abs"><span id="wmar" class="t" style="left:0;top:-6px;font-size:92px;transform-origin:0 0;transform:scaleX(.683);font-weight:bold;font-family:'DejaVu Sans',sans-serif;direction:rtl">مستقل</span><span id="wmen" class="t" style="left:1px;top:86.500px;font-size:37px;font-weight:bold;letter-spacing:-.1px">mostaql.com</span></div>
</body></html>
